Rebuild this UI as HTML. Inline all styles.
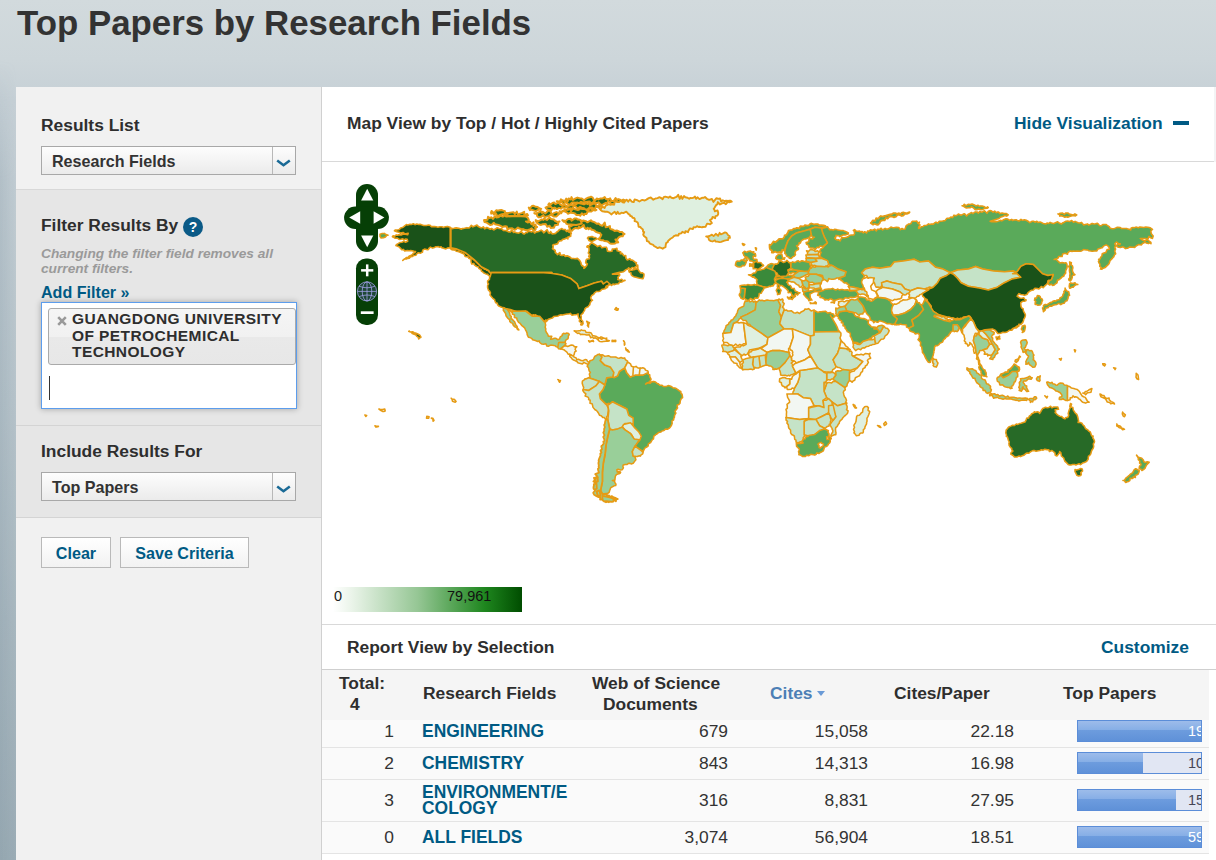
<!DOCTYPE html>
<html><head><meta charset="utf-8"><title>Top Papers by Research Fields</title>
<style>
*{box-sizing:border-box;margin:0;padding:0}
html,body{width:1216px;height:860px;overflow:hidden}
body{font-family:"Liberation Sans",Arial,sans-serif;color:#333;background:#c9d3d8;position:relative}
#bg{position:absolute;left:0;top:0;width:1216px;height:860px;background:linear-gradient(180deg,#d2dadd 0px,#cdd6da 60px,#c6d0d6 100px,#b7c4cb 400px,#a9b8c0 620px,#9cadb6 860px)}
#bg3{position:absolute;left:0;top:60px;width:17px;height:800px;background:linear-gradient(90deg,rgba(120,142,156,.22),rgba(120,142,156,0));-webkit-mask-image:linear-gradient(180deg,transparent 0,#000 120px);mask-image:linear-gradient(180deg,transparent 0,#000 120px)}
#bg2{position:absolute;left:0;top:0;width:1216px;height:100px;background:linear-gradient(90deg,rgba(205,214,218,0) 0,rgba(205,214,218,0) 100%)}
h1{position:absolute;left:17px;top:3px;font-size:34.85px;font-weight:bold;color:#333;white-space:nowrap;line-height:40px}
#left{position:absolute;left:16px;top:87px;width:306px;height:773px;background:#f1f1f1;border-right:1px solid #d0d0d0}
#right{position:absolute;left:322px;top:87px;width:894px;height:773px;background:#fff}
.sec{position:absolute;left:0;width:305px}
.lbl{position:absolute;left:25px;font-size:17.4px;font-weight:bold;color:#2e2e2e;white-space:nowrap;line-height:20px}
.sel{position:absolute;left:25px;width:255px;height:29px;border:1px solid #a8a8a8;background:linear-gradient(#fdfdfd,#ebebeb);font-size:16.1px;font-weight:bold;color:#333;line-height:29px;padding-left:10px;white-space:nowrap}
.sel i{position:absolute;right:0;top:0;width:23px;height:27px;border-left:1px solid #b8b8b8}
.sel svg{position:absolute;right:4px;top:12px}
.btn{position:absolute;height:31px;border:1px solid #b9b9b9;background:linear-gradient(#fff,#f2f2f2);font-size:16.1px;font-weight:bold;color:#005a84;line-height:30.5px;text-align:center;white-space:nowrap}
.note{position:absolute;left:25px;top:159.3px;font-size:13.7px;font-weight:bold;font-style:italic;color:#9a9a9a;line-height:15px;white-space:nowrap}
.addf{position:absolute;left:25px;top:195px;font-size:16.1px;font-weight:bold;color:#005a84;line-height:20px;white-space:nowrap}
.help{position:absolute;left:167px;top:130px;width:20px;height:20px;border-radius:10px;background:#0b5a87;color:#fff;font-size:14px;font-weight:bold;text-align:center;line-height:20px}
.tokbox{position:absolute;left:25px;top:215px;width:256px;height:107px;background:#fff;border:1px solid #5c9ded;box-shadow:0 0 6px rgba(0,0,0,.3)}
.tok{position:absolute;left:6px;top:5px;width:248px;height:57px;border:1px solid #aaa;border-radius:3px;background:linear-gradient(#f5f5f5 0,#f1f1f1 50%,#e9e9e9 51%,#e7e7e7 100%);font-size:15.5px;letter-spacing:.42px;font-weight:bold;color:#2e2e2e;line-height:16.6px;padding:2px 0 0 23px;white-space:nowrap}
.tok svg{position:absolute;left:7.5px;top:7px}
.cursor{position:absolute;left:7px;top:73px;width:1px;height:24px;background:#333}
.hd{position:absolute;font-size:17.4px;font-weight:bold;color:#2e2e2e;white-space:nowrap;line-height:20px}
.lnk{color:#005a84}
.hline{position:absolute;left:0;width:894px;height:1px;background:#d9d9d9}
#tbl{position:absolute;left:0;top:583px;width:887px;height:190px}
.th{position:absolute;font-size:17.4px;font-weight:bold;color:#2e2e2e;white-space:nowrap;line-height:21px;text-align:center}
.row{position:absolute;left:0;width:887px;background:#fafafa;border-bottom:1px solid #e4e4e4}
.c{position:absolute;font-size:17.4px;color:#333;white-space:nowrap;line-height:20px}
.r{text-align:right}
.f{font-weight:bold;color:#005a84;font-size:17.45px;line-height:15.5px}
.bar{position:absolute;left:755px;width:125px;height:22px;border:1px solid #5b8dd8;background:#e1e6f3;overflow:hidden}
.bar s{position:absolute;left:0;top:0;height:20px;background:linear-gradient(#9dbcea 0,#86aee6 45%,#6d9cde 46%,#5f91d8 100%)}
.bar u{position:absolute;left:110px;top:0;font-size:14.5px;line-height:20px;text-decoration:none;color:#fff}
</style></head><body>
<div id="bg"></div><div id="bg3"></div>
<h1>Top Papers by Research Fields</h1>
<div id="left">
 <div class="sec" style="top:0;height:103px;border-bottom:1px solid #d8d8d8"></div>
 <div class="sec" style="top:103px;height:236px;background:#e6e6e6;border-bottom:1px solid #d4d4d4"></div>
 <div class="sec" style="top:339px;height:92px;background:#e6e6e6;border-bottom:1px solid #d4d4d4"></div>
 <div class="lbl" style="top:28px">Results List</div>
 <div class="sel" style="top:59px">Research Fields<i></i><svg width="15" height="9" viewBox="0 0 15 9"><path d="M1.2 1.5 L7.5 6.2 L13.8 1.5" fill="none" stroke="#1a6a96" stroke-width="2.6"/></svg></div>
 <div class="lbl" style="top:128px">Filter Results By</div>
 <div class="help">?</div>
 <div class="note">Changing the filter field removes all<br>current filters.</div>
 <div class="addf">Add Filter »</div>
 <div class="tokbox"><div class="tok"><svg width="10" height="10" viewBox="0 0 10 10"><path d="M1.2 1.2 L8.8 8.8 M8.8 1.2 L1.2 8.8" stroke="#999" stroke-width="2.6" fill="none"/></svg>GUANGDONG UNIVERSITY<br>OF PETROCHEMICAL<br>TECHNOLOGY</div><div class="cursor"></div></div>
 <div class="lbl" style="top:354px">Include Results For</div>
 <div class="sel" style="top:385px">Top Papers<i></i><svg width="15" height="9" viewBox="0 0 15 9"><path d="M1.2 1.5 L7.5 6.2 L13.8 1.5" fill="none" stroke="#1a6a96" stroke-width="2.6"/></svg></div>
 <div class="btn" style="left:25px;top:450px;width:70px">Clear</div>
 <div class="btn" style="left:104px;top:450px;width:129px">Save Criteria</div>
</div>
<div id="right">
 <div class="hd" style="left:25px;top:26px">Map View by Top / Hot / Highly Cited Papers</div>
 <div class="hd lnk" style="left:692px;top:26px">Hide Visualization</div>
 <div style="position:absolute;left:851px;top:34px;width:16px;height:4px;background:#005a84"></div><div style="position:absolute;left:892px;top:0;width:2px;height:75px;background:#f3f4f5"></div>
 <div class="hline" style="top:74px;width:892px"></div>
 <svg id="map" style="position:absolute;left:0;top:0" width="894" height="773" viewBox="322 87 894 773">
<g stroke="#e69b14" stroke-width="1.55" stroke-linejoin="round">
<polygon fill="#1a5219" points="394.4,230.8 395.4,229.9 396.8,229.9 398.8,229.8 399.9,228.9 400.6,227.9 402.5,227.6 403.5,226.9 404.7,225.9 406.4,224.5 407.7,224.9 410,224.2 411.7,224.4 413.3,223.7 414.9,224.7 416.8,224.1 418.6,224.4 420,224.2 421.5,224.8 423.7,225.4 426.5,225.4 428.5,225.1 429.8,225.2 431.4,226.6 434.4,226.6 436.2,226.8 437.8,227.2 440,226.7 442.3,226.8 443.1,227.4 445.3,226.8 447.4,226.4 450.2,227.3 450.2,248.1 456.1,249.1 462,250.5 466.9,253.5 470.9,257.4 475.8,261.4 479.8,265.3 484.7,269.3 485.9,269.3 486.7,270.3 488,270.5 489.6,272.3 492.1,275.2 490.6,278.2 490.3,276.6 488.2,275.1 487.7,274.2 485.8,273.9 483.5,272.7 482.7,271.8 481.4,271 481,269.2 479.7,269 478.8,268.3 478.1,266.7 476.7,266.5 474.6,265.1 473.8,263.4 471.9,264.1 471.3,262.9 471,261.3 471,259.3 468.9,258.4 468.5,257.3 467,256.8 465.1,256.6 464.5,254.8 464,254 462.4,253.3 461.2,252.7 460.1,252.3 458.1,251.5 456.3,251.2 454.4,249.9 453.1,250 451.4,249.4 450.2,248.1 448.2,247.8 445.9,248.9 444.2,248.6 443.1,247.9 441.9,247.9 441.1,246.7 439.4,247.2 438.3,246.6 437.2,246.7 435.8,246.7 434.4,247.6 432.7,248.1 430.4,247.1 428.9,248.3 428.4,249.6 427.4,249.7 424.5,249.1 422.7,250.1 422.5,252.2 421.5,252.5 420.7,253.3 418,252.8 416.6,254 416,255.3 413.8,255.5 412.6,256.5 410.6,256.7 409.3,258.2 407.7,258.4 406.7,258.9 404.6,259 402.8,260.4 403.8,259.5 405.4,258.4 406.7,257.4 408.2,257.2 409,256.2 410.6,255.6 411.8,254.9 412.6,254.5 413.5,253 415,252.7 415.6,251.5 414.1,251.3 412,250.7 410.7,250.5 409.1,250.7 407.3,250.5 404.7,251 403.4,249.4 401.5,249.7 400.8,248.6 399.8,247.7 399,246.7 397.6,246.2 395.9,245.6 396.4,244.7 398.5,243.4 399.8,242.6 401.8,242.3 404,241.4 405.5,242.2 407.7,241.2 407.2,239.2 405.7,239 404,239.9 402.8,238.7 400.8,239.2 399.8,239.4 398.4,238.9 397.4,238.1 394.9,238.2 394.1,237.6 392.4,236.7 393.1,235.8 394.5,236.3 396.3,234.9 397.8,235.2 398.7,234.8 401.1,235.1 402.8,234.3 404.4,234.1 406.4,234.5 407.7,234.7 408.2,233.3 406.5,233.6 404.9,233.8 403.1,232.5 401.8,232.8 400.7,233.2 399,232.3 396.8,231.8"/>
<polygon fill="#276a27" stroke-width="1.65" points="450.9,228.1 452.1,228.6 454,228.3 456.2,227.9 458.8,228.2 460.3,228.7 461.4,229.2 462.2,228.6 464.5,228.3 466.9,227.7 469.1,228 470,227 471.4,225.3 472.9,226.8 475.4,225.8 477,225.1 478.4,226.6 479.3,227 480.9,227.7 482.1,227.7 483.3,226.8 484.7,228.8 486.8,227.5 488.4,228.2 490.3,229.2 491.6,228.5 493.7,229.9 495.2,229.1 497.2,227.8 499.1,228.5 501.5,228.7 503.4,230.5 505,230.5 506.5,230.7 508.5,231.9 510.3,232 511.7,230.1 513.7,232.5 514.7,231.9 516.2,232.8 518.8,233.1 520.9,231.8 522.5,232.7 523.1,233.6 524.4,234 526,232.3 527.2,232.6 528.2,231.3 529.7,231.3 531.5,231.9 533.4,231 534.6,233.1 536.3,231.9 538.7,231.5 541.1,230.1 542.7,231.2 543.7,232.8 547.2,229.7 548.5,232.9 549.7,233.3 550.5,231.5 552.3,233.9 554,233.8 555.5,233.4 556.7,231.9 557.9,231.4 559,230.1 560.9,229.1 561.9,228.5 563,229.5 565.4,229.6 566.5,231.5 567.9,230.5 568.6,231.9 571.3,233.1 570.7,234.7 570.7,236.3 567.9,237.1 567.9,238.9 566.4,238 564.9,238.9 563.4,239.3 562.3,239.6 561.7,240.6 559.5,241 558.4,241.8 557.8,243.6 555.4,244.4 553.9,244.5 552.7,245.2 553.3,247 552.5,248.7 553.8,249.5 555.2,250.5 555.3,252.5 556.7,253.6 557.5,254.7 559.8,252.5 560.4,255.3 562.2,255.4 564.2,254.9 565.1,256.4 567.2,255.9 569.4,256.7 571.4,258.4 573.5,258.5 575.1,258.8 577.4,258.4 579,259.9 579.8,260.7 581,262.9 581.1,264.1 581.9,265.5 583.1,266.2 584.1,267 583.9,268.3 585,267.5 586.7,265.5 587.3,264 585.7,262.8 586,260.6 586.6,259.2 589.2,258.8 589.5,257.1 588.7,256.4 589.7,254.6 588.3,253 588.8,251.5 589.1,250.2 589,247.8 586.9,246.9 587.4,245.9 589.1,245.9 590.2,243.8 591.8,242.7 593.1,243.5 595.8,245.2 597.4,246.6 600.2,245.5 601.9,247.8 604.2,247.3 606.3,247.2 607.1,248.9 607.5,251.1 609.8,251.5 611.9,251.3 612.3,249.1 614.1,249 615.4,248.7 616.9,248.4 617.2,250.8 619.6,251.5 620.6,251.7 620.4,253.6 622.2,253.4 623.8,255.7 625.7,255.5 625.9,258.1 627.3,260 629.9,258.7 630.8,259.9 632.8,260.3 634.8,261.9 636.4,262.7 636.1,263.8 637,266 637.8,268.3 637.7,265 637.4,266.4 635.4,266.7 634.1,268.7 633.4,267.7 632.2,267.5 630,269.4 628.7,267.8 627.9,269 625.7,269.7 625,270.5 623.6,271.7 621.3,272.1 619.6,272.3 612.4,274.1 619.6,274.1 619.6,275.4 617.9,277.2 618.4,278.8 617.8,279.5 619.7,280 621.7,279.3 623,280.7 625,280.4 623.2,281 622.2,281.7 620.8,282.2 619.4,282.1 618.5,283.8 616,284 614.5,284.6 613,284.1 611.5,285.4 610.1,284.4 608.8,284.9 607.9,285.6 607.5,287.2 605.1,288.6 603.3,284 601.5,281.3 594.3,283.1 587,285.8 578.9,288.6 577.1,284 570.8,278.6 561.7,275 550.9,273.2 540,272.6 551.9,272.6 491.3,272.6 489.7,272.3 488.6,270.5 481.3,266.8 474.1,259.6 465,252.4 456,248.8 450.9,247.8"/>
<polygon fill="#276a27" stroke-width="1.9" points="545.5,207.6 547,206.8 548.7,206.5 551.1,206.8 554.2,208.7 552.7,207.4 551.5,210.2 548.3,209.9 547.3,209.4 546.4,208.8"/>
<polygon fill="#276a27" stroke-width="2" points="559.5,211.2 561.2,213.3 562.2,211.2 563.3,210.6 565.1,209.6 567.9,209.9 569.8,208.7 571.1,211.3 572.9,208.3 575.2,209.3 577.8,210 579,209.6 580,208.5 582.3,209.1 583.7,209 585.4,208.5 587.9,211.5 588.8,209.2 590.4,208.1 592.5,209.7 593.7,209 596.5,209.9 595.1,210.5 593.2,210.1 591.4,211.6 588.8,211.2 587.4,212.2 586.4,214.1 584.6,213.8 583.9,215.2 581.8,213.3 580.3,215.8 579,214.9 576.2,214.9 575.4,213.8 573.1,212.9 570.5,212.7 567.9,213.8 567.2,212.7 565.1,211.6 562.7,211.1 561.2,211.7"/>
<polygon fill="#276a27" stroke-width="2" points="548.3,204.5 549.2,203.3 550.9,204.7 552.5,202.9 554.1,202.5 555.4,204 556.7,203.4 558.8,202.5 560.3,204.6 562.1,205.5 565.1,205.1 567.2,206.4 569.1,205.9 570.7,205.2 572.9,204.9 574.6,203.4 576.2,204.4 577,203.5 578.3,201.6 580.4,203.4 582.1,203.7 584,204.4 586.4,203.1 587.4,204 588.9,202.8 589.9,205.4 592.6,204.2 594.2,203.1 595.8,204.8 596.8,206.6 599,205 601.2,205 602.1,206.8 600.6,205.6 599.5,208.2 598.2,207.4 595.8,206.8 595,208.5 593,208.2 592.2,207.4 589.8,207.3 587.4,209.5 585.2,209.3 584.1,208.3 581.8,207.6 580.1,206.8 577.8,208.6 575.6,206.4 574,205.8 572.3,208.9 570.7,208.2 569,208.8 566.4,207.1 564.2,207.9 562.6,207.1 560.9,208.7 559.1,207.9 556.9,209.1 554.6,207.6 552.5,208.2"/>
<polygon fill="#276a27" stroke-width="2" points="556.7,201.2 558.7,201.6 560,201.4 560.9,199.3 562.2,200.1 564.9,201.2 566.2,198.6 567.8,201.2 568.6,198.5 570.7,199.5 571.5,197.1 572.8,200.2 575.1,198.7 577.4,197.6 579.5,198.3 581.8,198.5 584,200.3 586,198.7 587.8,197.8 589.8,197.3 591,196.7 592.7,197.6 594.5,201.3 596.7,198.5 598.4,199.4 600.5,198.4 602.8,198.4 604.7,197.1 606.1,199.2 608.6,199.1 610.1,198.4 611.4,201 613.6,201.1 615.6,198 616.7,200.3 618.2,199.1 619.4,199.4 621.7,200.6 623.3,199.6 625.2,200.5 624.3,200.9 621.9,201 619.9,201.8 617.9,202.9 616.8,202.3 615.7,203 613.7,203.8 611.3,204.1 609.7,202 608.2,200.8 607,203.7 605.8,202.8 603.1,204.4 600.8,204.8 598.7,202.3 596.9,203.1 595.8,203 594.4,203.1 593.2,202 591.1,203.6 589.5,201.4 587.3,201.8 584.6,202.3 583,202.6 580.9,201.7 579.2,203.2 577.6,202.6 575.5,202.8 573.5,202.6 571.6,202.8 570.4,204.4 568.3,204.3 565.8,202.1 563.7,203.7 562.8,203.4 561.3,201.7 559.1,202.4"/>
<polygon fill="#276a27" points="587.4,238.2 588.2,237.1 590.3,236.8 592,236.5 593,236.8 593.5,237.6 595.5,237.5 597.2,238.9 595.7,239.6 593,241 591.2,241.5 588.8,240.6 588.2,238.9"/>
<polygon fill="#276a27" stroke-width="2" points="580.4,220.1 581.7,221.3 583.3,220.5 585.8,221.1 587.2,222.3 588.8,221.5 590.9,220.3 592.2,221.5 593.8,221.9 595.2,222.6 596.7,223.7 598.6,223.6 600.2,225 602.4,225.9 604.7,222.5 605.7,227.3 608.4,226.6 609.9,226.1 610.1,228.4 611.2,229.3 612.7,229.6 614.6,230.9 616.8,230.5 618.5,231.1 619.6,232 622,231.9 623.4,233.5 624.5,234 623.3,234.6 622.7,236.3 620.6,236.3 619.6,236.8 618.4,237.8 616.8,239.8 615.4,239.6 616.2,241 617.6,241.2 618.2,242.4 616.7,242.2 615.1,243.4 612.7,243.8 611.2,243.8 609.8,243.4 608.1,241.7 606.7,241.2 604.2,241 603,240.2 601.3,240.3 599.6,239.8 598.6,238.9 599.9,237.9 600.9,235.8 601.4,234.7 600.5,233.9 599.8,232.9 598.3,232.7 595.8,231.9 594.7,230.7 592.7,229.8 591.6,229.8 590.3,228 588.6,229.3 587.7,227.7 586.1,229 584.6,227.7 583.8,225 581.8,226.8 579.8,228 579,226.6 578.3,228.6 575.3,228 573.5,229.1 571.9,230.8 570,230.9 567.9,230.5 570.6,231.3 570,229.6 568.9,226.3 570.7,226.3"/>
<polygon fill="#276a27" stroke-width="2" points="562.3,220.1 563.5,220.6 565.8,220.9 567,219.7 568,219 570.7,218.7 571.5,220.7 574.4,218.6 576.6,218.5 577.6,219.6 578.7,219.4 580.4,220.1 581.8,223.6 576.2,225 567.9,224.3 566.6,223.9 565.4,221.9 563.9,221.7"/>
<polygon fill="#276a27" stroke-width="2" points="535.7,220.1 537.9,221.3 540,220.4 541.8,219.4 543.5,219.9 544.1,218.7 545.2,219.1 546.9,219.9 549.5,217.5 551.1,219 553.9,219.4 555.2,221 557.4,222 559.5,221.5 558.3,222 558,224.8 556.7,225 555,225.1 554,227.7 552.5,227.7 550.7,227.9 549.6,225.7 548.3,226.3 547.2,226.8 545.7,224 542.7,224.3 541.1,224.9 539.3,224.5 537.1,222.9 536.3,221.9"/>
<polygon fill="#276a27" stroke-width="2" points="534.3,213.1 535.4,213.8 536.5,213.1 539,212.4 540.4,210.6 542,213 542.7,211.7 544.1,212.7 545.5,213.4 548,210.7 549.8,210.4 551.1,212.4 551.6,214.9 553.8,213.2 556.4,212.1 558.1,212.8 559.5,213.8 558.2,214.8 556.3,216.6 553.9,216.6 551.9,215.4 550.4,214.7 549.3,215.8 547.8,216.3 545.5,216.8 544.6,217.3 543.5,215.1 541,216.9 538.5,217.3 537.1,215.9 537.1,214.5 535.9,213.7"/>
<polygon fill="#276a27" stroke-width="1.9" points="528.7,207.5 529.7,208.6 531.9,206 533.3,205.7 535.7,206.8 537.6,207 539.3,208.1 541.3,208.9 540.3,209 538.6,208.5 538,210.3 537.1,210.3 535.9,211.2 533.6,210.4 531.5,209.6 529.9,210.2"/>
<polygon fill="#276a27" stroke-width="1.9" points="503.6,213.8 511.9,212.4 513.5,212.1 514.8,214.2 516.8,211.5 518.1,215.1 519.7,213.7 521.7,213.1 524.2,211.8 524.3,215.1 527.1,213.9 528,215.2 520.3,216.3 510.5,215.9 508.4,216.3 507.5,214.3 504.7,216.7"/>
<polygon fill="#276a27" stroke-width="2" points="484,220.1 485.6,219.9 487.5,219.8 488,216.8 489.6,218 491.2,217.3 493.1,218.9 495,216 496.3,217.4 498,217.3 499.1,216.8 500.4,215.5 502.8,216.7 504.4,215.5 506.3,216.6 516.1,215.9 525.9,216.6 527.6,217.5 528.7,219.4 528.5,221.3 525.9,221.5 527.6,222.5 530,221.8 531.5,224.3 533.6,222.3 533.4,225.9 535.5,224.5 536.1,226.8 537.1,227 535.2,227.7 535.7,229.1 535,230.4 533.7,230.5 531.6,228.3 529.9,229.4 528.7,229.8 527.7,230.2 525.4,230.1 522.7,229 521.7,230.5 520.9,228.7 519.4,228.6 518,227.5 516.1,229.1 514.6,229.8 512.2,228.3 509.1,228.4 507.4,229.6 506.8,226.4 505.1,226.2 502.2,227 500.7,225.9 498.5,225 496.1,224.5 495.2,224.3 493.8,222.7 492.1,224.6 490.2,225 488.2,223.6 486.6,222.4 484.5,222"/>
<polygon fill="#276a27" stroke-width="1.9" points="491,212.4 491.6,210.9 493.7,212.9 495.1,211.6 496.4,210.1 498,210.7 499.4,210.2 501.3,210 503.3,210.7 505,211.2 504.8,212.6 507,213.1 500.8,214.5 499.3,215.2 497.5,216.5 496,213.3 493.8,214.5 493.9,212.9 491.2,213.7"/>
<polygon fill="#276a27" points="628.7,270.5 630.4,270.3 631.8,270.3 633.3,269.8 634.9,269.4 635.9,268.7 637.8,268.9 639.1,271 640.7,272.9 642.4,272.8 644,274.1 643.9,276 643.1,278.6 641.7,278.6 639.6,278.2 637.7,277.7 636,277.2 633.7,276.7 632.3,275.9 631.2,274.8 630.9,272.7 629.3,272.3"/>
<polygon fill="#1a5219" points="491.3,272.6 551.9,272.6 540,272.6 550.9,273.2 561.7,275 570.8,278.6 577.1,284 578.9,288.6 587,285.8 594.3,283.1 601.5,281.3 603.3,284 606.9,281.3 609.7,284 608.4,285.3 607.2,285.8 606.1,286.3 605.1,288.6 603.8,289.1 601.6,289.5 600.4,290.9 599.7,291.3 598.5,291.6 596.6,291.4 594.3,293.1 593.7,294.3 591.8,295.4 590.7,297.6 590.9,298.9 592.5,300.3 591.5,300.8 590.2,302.8 589.8,304.8 589,305.4 588.1,306.8 586.1,307.6 584.9,308.7 584.6,310.4 583.4,312.1 583,313.2 581.3,314.7 580.7,315.7 581.3,316.6 581.2,318.5 581.6,320.2 582.8,321.3 583.1,323.8 581.8,325.1 580.7,324.7 581.5,323.1 579.3,321.1 579.9,319.3 579,318.4 578.2,316.3 578.1,313.9 576.7,314.5 575.4,314.8 574.5,314.8 572,315.2 570.3,313.4 568.2,313.9 567,313.9 564.6,314.4 562.4,315.1 560.9,314.8 559.3,315.2 558,316 556.4,316.2 553.7,316.6 552.3,318.1 550.7,318.4 548.3,319.3 547.7,320 546.9,321 544.6,322 541,318.4 535.6,314.8 534.6,315.3 533.3,314.7 532,315.7 526.6,311.2 517.5,312.1 510.3,309.4 504.8,308.8 504.1,307.8 501.6,307.3 500.5,306.7 498.8,306.1 497.6,304.8 497.3,303.2 495.7,302.7 495,301 494.6,299.7 492.8,298.3 492.2,297.6 491.4,296.7 490,294.9 490.5,292.8 489.5,291 488.6,290.4 488.1,289 487.6,287.4 487.6,285.5 488.5,283.8 487.7,283.1 487.6,281.1 489.5,279.2 489.5,277.8 490.4,275.9"/>
<polygon fill="#dff0e0" stroke-width="1.9" points="612.4,204.4 614.2,204.7 614.8,201.1 617.5,202 619.2,202.1 620.9,200.8 622.7,202.3 624.1,202.6 625,201.3 626.6,199.7 628.2,201.7 629.8,199.5 632.1,201.8 633.7,202.1 634.6,199.4 637.1,200.2 639.4,201.5 641.3,200.3 642.2,199.9 644.8,200.5 646.4,199.6 648.7,198.1 650.8,197.5 653.3,199.7 655.5,198.5 657.6,198.1 659.1,197.2 661.1,198 662.6,199.2 663.7,197.2 665.3,196.6 667.1,197.1 668.5,197.7 670,196.4 671.4,197.7 673.6,198.2 675.7,197.2 676.6,196.8 678.2,194.8 679.8,198.9 681.2,196 682.4,198.9 684,196.1 685.3,197.2 687.5,197.7 689.2,198.8 690.5,197.9 692.1,198.1 693.8,197.6 695,196.6 696.1,198.8 697.4,197.3 699.5,199.1 702,197.8 703.5,197.9 705,197 706.9,198.8 709.2,199.8 711.9,199 713.4,201.9 716.5,198.1 718.2,198.9 720.1,198.5 721.1,201.4 722.8,200.2 724.7,201.3 726,200.7 728.1,201 729.2,202.4 731.8,201.7 730.6,200.6 729,200.7 727.5,202.1 725.9,204.2 724,202.8 722.6,203.2 721.5,203.7 720,204.5 717.8,202.1 717.3,204.4 716.3,204.9 715.1,206.7 714.2,208.2 713.7,208.9 714.5,209.9 714.9,211.4 717.5,210.4 718.2,212.6 718.2,214 717.4,215.7 715.5,216.2 715.1,218.2 712.6,216.9 711.9,218.9 709.9,220 711.9,223 710.1,224.3 708.6,223.9 707.1,223.7 705.5,226.9 702.8,227 702,227.3 700,226.8 698.6,227 697,226.1 695.6,227.4 693.6,227.2 692.8,229.1 690,228.4 688.4,230.7 688,232.2 685.5,231.2 684.9,233 682.4,231.8 681.1,233.4 680.2,233.6 679,233.6 678.4,235.6 675.8,235.3 673.9,236.1 672.7,237.5 670.5,238.8 669.4,239.7 668.1,240.9 667.8,242.1 666.3,242.8 665.7,245.1 665.5,247.2 663.9,247.8 662.7,248.7 660.4,247.7 659.4,247.3 657.7,248.1 656.2,247.2 654,246 653.2,244.8 650.6,243.9 649.7,243.2 648.6,241.5 646.9,241.1 646.5,238.1 644,236.1 643.2,234.5 644.2,232.2 643.1,231.6 642.9,229.5 641.1,228.1 640.4,227 638.6,226.7 638.3,224.6 637.7,222.5 636.5,221.7 634.6,221.1 634.8,219.1 634.1,218 632.5,217.7 631.7,216.2 630.2,216 629.7,214.5 628.7,214.4 627.9,213.3 626.3,211.6 623.3,213.1 621.4,212.6 620.4,213.6 618.9,213.8 617.6,211.8 616.4,214.1 614.7,211.8 612.4,213.5 611.3,214.4 609.3,212.6 607,211.7 605.1,211.7 604,211.5 602.3,211.3 600.6,209.9 599.7,208.9 601.2,208.6 602.2,206.5 604.6,207.9 605.9,205.3 607.3,205 608.9,204.2 610.4,204.9"/>
<polygon fill="#c2e2c8" stroke-width="1.8" points="706.1,236.5 707.6,236.3 709.5,236 711.9,234.6 713.6,236.1 715.8,233.8 718.1,235.8 719.6,232.8 720.9,234.3 722.6,233.6 725,232.4 726.6,232.9 728.2,235.2 729.6,236 730,237.9 728.5,237.6 728.2,240 726.7,240.2 724.5,240.6 723.1,241.1 721.2,241.8 719.6,242.1 717.2,241.6 715.5,241.5 714.9,240.3 712.6,241.5 711,241.1 709.2,240.1 708.7,239.1 708.4,237.5"/>
<polygon fill="#99cf99" points="503.5,308.1 510.8,311.2 525.2,310.9 532.5,316.3 539.7,316.3 544.2,321.7 546,319.9 546.2,321.4 545.1,322.6 545.7,325.1 545.1,327.1 545.8,328.8 545.6,330.4 546.3,332.3 547.8,334.4 548.4,336.3 551.8,336.2 550.7,339.3 552.4,338.9 554.3,338.3 555.6,338.2 557.8,339.7 559.6,338.9 560.1,337.1 562.4,335.4 562.3,334.4 563.6,333.3 565.1,333.7 566.8,333.1 568.7,333.5 569.2,334.6 568.3,336.2 568.3,337.6 567.8,338.9 566,339.9 565.3,341.4 565,342.5 559.6,342.5 558.7,347 557.7,346.9 556.2,346.7 555.2,345.7 554,345.6 552.4,345.2 550.7,345.1 548.3,346.2 546.9,346.1 545.9,343.8 543.7,344.3 541.9,344.1 540.5,343.1 539.7,342.5 539.2,340.9 537.7,341.4 535.4,340.6 532.5,339.8 532,338.6 529.7,337.4 528.4,337.2 527.9,336.2 527.2,334.7 527,332.9 526.1,330.8 525.5,329.8 524.6,327.8 523.2,326.6 521.6,325.3 520.8,324.2 519.8,323.1 518.6,322.4 517.1,319.9 516.7,318 514.4,317.4 514.5,314.9 513.5,314.5 512.3,314.3 512.4,312.5 511.1,311.9 510.4,310.4 508.9,310.6 507.1,309.4"/>
<polygon fill="#99cf99" points="503.5,308.1 507.1,309 508.1,310.5 509.3,312.3 509.8,313.6 509.9,314.5 510,315.4 511.3,316.3 511,318.7 512.3,319.3 513.5,320.8 514.4,321.4 515.1,323.1 516,325.2 517.1,326.2 517.2,327.6 518.9,329.9 517.6,329.6 516.6,327.6 515.3,327.1 514,326.1 513,324.8 512.8,323.4 510.8,322.6 509.8,321.4 509.5,319.5 507.9,318.4 507.1,317.2 506,315.7 505.6,313.6 504.4,311.8 503.3,310.3"/>
<polygon fill="#99cf99" points="558.7,342.5 565,342.5 566,343.7 564.1,346.1 560.5,348.9 558.6,348.8 557.8,347.4"/>
<polygon fill="#f2f7f2" points="564.1,346.1 565.7,345.7 567.7,346.5 568.8,346.1 570.5,345.2 571.8,345.1 573.6,345.6 574.4,346.8 576.8,346.7 575.7,347.8 575.1,349.4 576.2,351.1 575,351.6 574.5,352.9 574.1,354.6 573.2,356.1 569.6,354.3 568.3,354.3 566.9,352.1 565,350.7 563.8,349.7 562.3,349.2 560.5,348.9"/>
<polygon fill="#dff0e0" points="569.6,354.3 573.2,356.1 574.3,357.1 576.1,357.9 576.8,359.7 578.5,359.3 579.6,359.7 581.3,360.6 582.8,360.7 585,359.6 586.7,359.7 587.5,361.5 589.5,362.4 587.7,365.1 587.4,363.9 586.1,363.6 584,362.4 582.4,363.9 579.5,363.3 577.9,362.8 577.2,361.7 575,360.6 573.6,360 572.4,359.4 571.4,357.9 569.8,356.5"/>
<polygon fill="#dff0e0" points="574.1,330.8 575.7,331 577.2,331 579.1,330.8 580.3,330.8 581.3,329.9 583.1,330.6 585.1,330.5 586.1,332.4 587.8,332.4 588.6,332.6 589.7,332.6 591.2,333 592.6,335.6 595.8,336.2 597.5,337.2 599.5,337.9 601,336.9 602.5,337.5 603.9,339.2 604.8,338.9 599.4,339.4 597.9,339.6 596.9,338.9 595.3,337.8 593.9,338.3 592.2,337.1 590.7,337.8 589.3,334.7 586.6,335 584.9,334.4 583.9,334.5 582.2,334.2 580.8,334.6 579,333 577.7,333.5 576.2,332.4 575.4,331.6"/>
<polygon fill="#f2f7f2" points="598.5,338 599.6,338 601.8,339.3 603.1,338.1 604.6,338.2 605.8,338.7 606.7,338 606.4,339.9 609.4,340.7 607.9,341.2 605.8,341.3 603,341.6 602.1,341.7 599.7,341.4 598.5,340.7 598.2,339.1"/>
<polygon fill="#f2f7f2" points="588.6,340.7 589.7,341.4 591.1,340.9 593.1,340.2 593.6,341.6 592.1,341 589.5,342"/>
<polygon fill="#f2f7f2" points="612.1,340.2 613.7,340.4 615.7,340.2 615.7,341.6 614,341.2 612.1,341.6"/>
<polygon fill="#f2f7f2" points="623.5,340.7 624.7,342.5 624.3,343.5 624.4,345.2 624.9,344.1 624.3,341.8"/>
<polygon fill="#f2f7f2" points="625.6,347.9 626.3,349.4 627.5,349.8 628,351.8 629.3,352.1 628.1,350.4 626.9,350.7 626,349.9"/>
<polygon fill="#f2f7f2" points="586.7,321.3 587.9,321.9 589.5,322.6 588.7,324.1 588.4,326.2 588.6,327.1 587.4,325.6 587.8,324.4 587.4,322.6"/>
<polygon fill="#f2f7f2" points="614.8,309.4 616.2,307.5 617.7,309.4 618.4,308.7 617.9,310.1 616.3,310.1"/>
<polygon fill="#f2f7f2" points="557.8,379.6 558.9,380.2 560.5,380.5 559.6,382.3 559,381.6 558.7,380"/>
<polygon fill="#5aaa5a" points="606.7,377.8 613,376.9 617.5,376 619.3,371.5 624.7,367.8 626.6,372.4 630.2,376.9 635.6,375.1 642.8,375.1 648.3,372.4 648.1,374.2 649.7,374.8 649.9,377.3 650.8,378.4 651,379.6 649.9,381.3 648.5,382.5 645.6,384.1 646.2,383.4 647.4,382.7 650.2,383.2 651.7,381.8 653.7,381.4 655.5,382 657.1,383.4 658.3,383.8 659.8,385.3 661.8,385.2 662.7,385.9 663.5,386.4 665.9,386.6 668.1,385.6 670,386 671.8,386.8 673.3,388 674.8,387.9 676.6,388.8 678.2,389.9 679.1,390.8 680.8,391.4 680.9,393.1 682.1,394.4 682.6,397.7 681.3,398.6 680.3,400.8 680,403.3 678.9,404.5 677.2,405 677.2,406.7 677.6,407.9 676.6,409.2 674.9,411.4 675.9,413.1 675,414.5 674.5,415.8 674.4,417.4 673.9,418.1 673.6,419.8 671.9,421.1 672.2,423.3 671.5,425.3 670.3,427.1 669.7,427.9 667.8,429.2 665.5,429 664.3,430.3 663,430.8 662,430.9 660.9,432.1 658.7,432.4 656.7,434.2 655.8,434.4 655.1,435.4 653.8,436.2 653.5,438.9 652.2,439.8 651.6,440.9 650.6,442.5 648.4,443.9 648.1,446.2 646.7,447 645.1,447.9 644.1,449.4 643.1,451.6 635,446.1 639.5,439.8 640.4,436.2 637.7,432.6 633.2,428.9 633.2,423.5 633.2,418.1 628.7,415.4 626.8,409 617.8,404.5 612.4,401.8 610.3,404 608.5,403.3 607.1,404.2 604.8,403.1 599.4,398.6 599.4,394.1 603,389.6 604.8,385"/>
<polygon fill="#99cf99" points="589.5,362.4 589.9,360.7 592.5,359.9 593.7,359 594,357.9 594.9,356.2 596,355.8 597.9,354.4 599.4,354.3 602.1,357 600.3,360.6 604.8,365.1 610.3,366.9 613.9,372.4 613,376.9 606.7,377.8 604.8,385 599.4,381.4 594,379.6 588.6,377.8 590.1,376.7 589.3,374.1 590.4,372.4 589.5,371.5 588.9,370 588.6,367.8 587.2,366.4 587.7,365.1"/>
<polygon fill="#c5e3c7" points="599.4,354.3 600.1,354.9 602.1,354.8 603.7,355.5 604.7,356.3 606.7,356.1 608.5,355.7 610.9,357.1 612.5,357 615.2,356.9 616.3,357.3 617.5,357.9 619.2,358.3 621.1,357.5 622.8,358.3 624.7,357.9 625.3,359.6 627.6,361.1 627.5,362.4 624.7,367.8 619.3,371.5 617.5,376 613.9,377.8 613,376.9 613.9,372.4 610.3,366.9 604.8,365.1 600.3,360.6 602.1,357"/>
<polygon fill="#f2f7f2" points="627.5,362.4 628.4,362.5 630.5,363.8 631.4,366.3 633.8,366.9 634.7,366.8 636.1,366.4 637.6,367.8 640,368.4 642.8,367.8 644.6,368.4 645.5,370.1 647.8,371 648.3,372.4 642.8,375.1 635.6,375.1 630.2,376.9 626.6,372.4 624.7,367.8"/>
<polygon fill="#f2f7f2" points="633.4,367.3 632.9,375.1"/>
<polygon fill="#f2f7f2" points="640.1,367.8 639.2,375.1"/>
<polygon fill="#c5e3c7" points="588.6,377.8 594,379.6 599.4,381.4 595.8,385.9 588.6,390.5 583.1,389.6 583.7,387.6 582.9,385.5 582.2,383.2 582.4,381.2 584.5,379.7 584.9,378.7 585.8,379"/>
<polygon fill="#c5e3c7" points="583.1,389.6 588.6,390.5 595.8,385.9 599.4,381.4 604.8,385 603,389.6 599.4,394.1 600.3,398.6 604.8,403.1 605.3,403.8 606.7,404.9 608.5,408.6 607.6,415.8 606.6,416.8 606.7,419.4 605.2,418.9 604.3,417.6 602.7,417.4 601.2,415.8 599.6,415.3 598.6,413.4 597.4,411.5 596.1,410.3 595,409.7 594,408.6 592.9,407.1 592.5,405 592.1,403.8 590,403.3 590.2,400.3 588.6,399.5 588.8,398.4 588,397.1 585.1,396 585.9,393.8 584,392.3 582.8,390.6"/>
<polygon fill="#c5e3c7" points="607.8,419.9 608.8,410.9 607.8,405.4 612.4,401.8 617.8,404.5 626.8,409 628.7,415.4 633.2,418.1 633.2,423.5 632.2,424.2 630.5,423.5 625,423.5 622.3,427.1 617.8,428.9 612.4,429.9 609.7,428.9"/>
<polygon fill="#dff0e0" points="622.3,427.1 623.6,424.4 630.5,422.8 634.1,427.1 638.6,431.7 641.3,436.2 639.5,440.7 634.1,439.4 631.4,434.4 625,429.9"/>
<polygon fill="#99cf99" points="609.7,428.9 612.4,429.9 617.8,428.9 622.3,427.1 625,429.9 630.5,433.5 634.1,438.9 639.5,439.8 635,446.1 632.3,451.6 633.2,456.1 635,457.1 635.9,459.7 635,460.9 633.2,463.3 631.8,463.9 629.3,463.2 628.1,463.6 627.1,464.5 625.2,464.5 623.2,465.1 622.9,466.4 623.4,467.8 622.3,469.7 620.5,469.9 618.1,469.2 616.9,469.7 617.2,471.9 620.5,472.4 620,473.1 618.7,473.7 616.5,474.5 615.4,476.2 615.1,477.8 614.9,480.1 612.4,480.5 614.4,481.1 615.1,482.9 616,484.1 615.7,485.6 614,485.8 612.4,486.8 610.8,487.6 609.7,490.5 609.1,492.5 607.8,493.2 602.4,494.1 600.6,490.5 602.4,481.4 602.4,472.4 603.3,463.3 605.1,454.3 606,445.2 607.8,436.2"/>
<polygon fill="#99cf99" stroke-width="1.8" points="606,419 607.8,419.9 609.7,428.9 607.8,436.2 606,445.2 605.1,454.3 603.3,463.3 602.4,472.4 602.4,481.4 600.6,490.5 602.4,494.1 606.9,494.1 607,495.9 609,495.4 609.7,496.8 611.7,496.1 613.9,497.4 616,498.2 617.8,499.1 615.8,499.4 614.2,499 612.4,501.3 609.9,499.1 608.8,502.2 608.1,501.2 606,502.3 604.3,499.9 603.3,499.3 601.5,499.5 600.1,499.7 600.2,496.8 598.6,497.2 596.1,495.9 594.2,494.8 593.2,492.8 594.8,490.8 595.1,489.5 594.3,488.7 594.7,486.9 595.2,485.5 595.1,484.2 595.5,482.6 593.4,481.4 594.8,480.2 593.9,477.8 597.6,477.4 597,476 595.2,474.2 599,472.6 598.2,470.4 597.9,468.8 598.9,467.8 598.6,466.6 598.8,465.5 598.4,463 598.8,461.5 598.6,460.5 599,459 599.9,456.9 600.5,455.5 600.3,453.7 601.5,452.5 600.5,450.5 602,449.3 601.7,448.1 601.3,446.2 602.5,445.1 603.8,443.5 603.3,441.6 604.5,440.8 604.3,439.4 603.2,437 604.5,435.2 603.3,432.7 604.2,430.8 604.1,428.9 604.9,427.1 604.1,424.9 604.9,423.7 605.1,421.7 605.4,420.9"/>
<polygon fill="#c5e3c7" points="635,446.1 641.3,450.7 643.1,452.5 642.7,453.9 640.8,455.2 640.4,456.1 639.4,455.8 637.2,456.6 635.9,456.5 634.9,456.2 633.2,456.1 632.3,451.6"/>
<polygon fill="#f2f7f2" points="617.8,471.5 620.5,472 619.6,473.5"/>
<polygon fill="#5aaa5a" points="826.2,227.3 827.5,226.8 828.7,228.6 829.6,229.7 831,229.6 833.2,230.1 834.8,229.2 836.2,229.4 837.9,230.1 841,230.4 842.9,230.4 844.2,231 846.6,231.9 848.4,232.9 848.2,234 845.9,234.7 845.2,235 843.1,235 841,236 839.8,236.7 838.7,235.7 836.1,235.4 835.7,237.3 834.8,237.8 835.7,239.3 837.3,240 838.5,239.7 840.1,241 841.7,237.6 843.5,237.7 844.7,237.8 846.5,237.3 848.4,236.6 849.7,235.3 851.9,235.1 853.9,234.9 854.6,233.5 854.4,232.5 854.2,231.2 853.4,230.4 854.6,229.5 856.1,231 858,231.2 859.5,231 860,231.8 862.2,231.5 863.2,232.9 864.7,231.7 866.6,233 867.7,230.9 869.4,231 870.4,229.7 872.6,230.2 874.7,229.1 876.3,230.9 877.5,229.3 879,229.2 880,229.2 881.2,228.2 882.6,229.9 885.1,228.4 887,229.2 889,228.5 890.9,227.1 892.4,227.5 893.9,227.8 896.4,227.2 898.8,227.4 900.4,229.7 902.1,228.5 903.2,229.3 905.1,228.9 906,226.1 906.7,225.2 907.9,224.6 908.7,223.9 909.7,223.9 910.9,223.6 911.6,222 912.6,221.2 914.1,221.2 915.6,221.2 916.8,221 917.8,223.1 919.5,222.1 918.6,223.5 920,225.1 918.6,227.1 918.6,228.4 919.7,228.3 921.2,226.8 923.1,226.6 924.1,225.4 926.5,225.3 927.5,224.7 928.6,223.9 929.7,224.4 931.2,224.1 933.4,224.1 934.7,222.9 936,222.1 937.6,223 938.4,222.5 939.1,221.3 941.2,221.3 942.6,221.1 945.1,220.6 946.7,218.5 947.5,218.2 949.3,218.3 950.8,217 952.6,217.6 954,215.1 955.7,215.8 957.5,214.9 958.3,214 961,215.2 963.3,214.1 964.6,213.8 966.6,216 968.4,213.9 969.5,213.7 971.6,212.5 973.1,213.6 974.2,212.4 975.3,211.9 977.4,212.1 978.4,213.1 979.8,211.4 982.1,212.2 984.4,210.7 987.1,213.2 988.3,211.2 990.1,210.6 991.7,211.1 993.1,212.2 994.7,211.1 996.3,212.7 997.3,212.1 998.8,212.1 999.6,213.5 1002.1,213 1004,213.5 1006.5,213.5 1008.2,214.9 1006.7,216.1 1004.6,215.6 1002.7,216.5 1000.4,217.2 999.1,218.5 990.1,221.2 991.7,221.8 993.4,221.7 995.8,221.6 997.1,221.6 998.9,220.9 1000.9,220.3 1001.8,220.9 1004.1,219.4 1006,218.8 1007.8,219 1009.5,220.3 1011.8,219.4 1012.6,220.5 1013.9,219.9 1016.1,219.7 1017.4,220.4 1019.2,220.9 1021,219.3 1022.6,220.3 1024.4,219.8 1026.3,220.3 1028,221.2 1029.7,222.6 1032.2,221.3 1033.5,221.2 1035,222.2 1036.9,221.3 1038,222.4 1040,222.1 1041.1,222.3 1043.2,223.5 1046.1,223.9 1047,223 1048.7,223.5 1050.1,222.4 1051.5,223 1053.5,223.6 1055.4,222.7 1057.7,221.8 1059.1,223 1061.6,223.9 1062.4,223 1063.7,222.5 1066,221.2 1067.6,221.1 1069.9,221.4 1071.7,220.5 1073.5,222.3 1075.1,221.4 1076.8,222.1 1078.1,222.8 1079.5,223 1081.6,222.4 1083.7,225 1085.2,224.5 1087.7,223.9 1088.6,225.1 1089.8,224.6 1092.1,223.4 1094.2,224 1095.5,223.8 1097.4,223.2 1098.6,224.4 1099.5,225.6 1101,225.8 1103.1,224.4 1104.5,224.4 1106.3,224.5 1107.6,225.7 1109.3,226.7 1110.3,228.3 1111.2,228.4 1112.2,228.8 1114.6,228.4 1116.5,227.6 1117.6,227.3 1120.3,227.5 1121.7,228.6 1124,228.4 1126.6,228.4 1127.8,229.1 1129.3,229.3 1130.8,230 1131.2,227.9 1132.9,227.5 1134.3,227.8 1135.9,227.1 1138.4,227.8 1140,226.9 1141.9,227.2 1143.8,227.5 1145.8,227.1 1147.7,227.2 1149.2,227.6 1150.7,228.1 1152.5,229.3 1151.5,230.2 1150.8,231.7 1151.5,233.9 1153.2,236 1152.5,238.4 1150.7,237.8 1149,236.4 1147.8,239.4 1145.6,238.4 1140.2,238.4 1140.9,238.9 1142.8,240.3 1144.7,240.9 1146.3,240 1147.7,240 1149.2,241.1 1150.9,242.3 1151,243.8 1150.1,242.9 1148.4,243.6 1146.2,243 1145.2,242.2 1143.8,242.9 1142.7,243.3 1141.5,244.9 1138.6,244.6 1136.5,245.7 1134.7,247.4 1133.2,247.2 1132.1,247.2 1129.8,246.9 1127.5,248.3 1125.5,248.6 1123.7,247.1 1122.1,246.9 1120.3,247.4 1118.6,247.2 1117.1,246.7 1116.7,245.6 1117.5,244.1 1119.6,244.8 1120.3,243.8 1118.6,243.6 1116.6,242 1114.8,243.8 1115.7,245.5 1114.8,247.4 1115.6,249.1 1114.7,251.1 1115.7,253.8 1114.6,254.7 1113.8,256.8 1113,257.4 1111.8,258.9 1110,260.8 1109.4,262.8 1108.5,264.5 1107.1,265.6 1105.3,267.4 1103.1,268.2 1101.9,269.3 1100.4,269.1 1101.4,267.6 1099.8,266.4 1099.9,264.1 1099,263.1 1098.4,261.3 1099.3,259.9 1098.6,259.2 1100,258.9 1100.7,257.2 1101.9,256 1102.2,253.8 1104,253 1105.9,252.4 1107.1,249.5 1109.4,249.2 1109.1,247.4 1107.6,245.6 1106.1,244.9 1103.9,245.9 1103.1,246.5 1102.4,247.7 1100.9,247.9 1099.8,248.6 1097.9,249.1 1096.7,251 1094.7,251.1 1092.1,251.3 1090.8,251.1 1088.9,250.7 1087.7,250.1 1086.2,249.9 1083.6,249.6 1081.6,250.9 1080,251.2 1076.8,251 1075.7,251.2 1073.1,251 1072,251.5 1070.7,251.1 1068.9,251.7 1067.8,252.8 1067.6,254.2 1065.1,253.2 1062.6,254 1062.1,256.5 1060.6,256.5 1058.6,256.5 1058,258.2 1055.7,259.1 1054.2,259.5 1055.4,259.1 1057.3,260.5 1058.8,261.9 1059.9,262.9 1062.1,262.6 1064.6,263 1066,262.8 1066.8,263.9 1067.2,266.3 1066.9,268.2 1066.1,269.8 1065.6,271 1065.7,273.1 1064.2,274.6 1064,276 1061.9,277 1061,278.2 1058.8,280 1057.5,280.1 1057,282.8 1055.1,284.1 1053.7,285.3 1052.4,285.4 1051.5,284.2 1049.5,284.9 1047.9,283.6 1048.5,282.6 1049.5,280.2 1051.5,279.1 1053.3,274.6 1047.9,275.5 1042.5,273.7 1037,268.2 1033.4,264.6 1026.2,263.7 1020.8,266.4 1017.1,271.8 1012.6,273.7 1013.6,270.9 1004.5,271.8 993.7,270.9 982.8,269.1 975.6,266.4 968.4,269.1 957.5,270 950.3,272.8 943,269.1 935.8,267.3 928.6,261 919.5,261.9 914.1,259.2 903.2,261 894.2,261.9 890.6,266.4 879.7,268.2 872.5,267.3 865.2,269.1 861.6,272.8 864.3,275.5 864,277.4 862.5,279.1 864.5,284.1 866.3,287.8 865.4,287.6 863.6,288.4 862,288.4 860.8,289 853.4,287.2 848.4,286.5 848.9,284.5 847.2,284.1 846.7,282.8 844.6,283 843.4,282.4 842.7,281 841,280.4 840.9,279.1 838.9,279.4 838.5,277.9 844.7,276.1 845.9,271.7 838.5,269.3 832.4,265.6 831.1,265.1 829.7,265 828.7,264.3 827.4,260.6 821.3,257.6 819.8,256.3 820.3,254.1 821.1,252.3 818.8,252 820,250.8 820.5,249.1 822.7,247.9 823.7,246.5 827.4,242.8 824.4,237.2 822.5,232.3 821.3,228"/>
<polygon fill="#5aaa5a" stroke-width="1.8" points="870.7,223 871.6,222.1 872.9,220.3 875.3,220.8 876.1,218.2 878.3,218.7 879.7,216.7 880.8,216 883.1,216.6 884.1,215.9 885.3,215.8 886.8,215.3 889.2,214.7 892.4,213.9 893.5,213.1 895.2,213.1 897.2,213.9 899.1,213.2 900.6,214 902,212.6 903.8,212.5 905.8,213.2 907.5,212.9 909.6,212.1 908.7,213.2 906.8,213.9 905,213.8 903.2,215.6 901.8,216 900.1,215.1 897.7,214.6 896,216.6 894,217.3 892.4,216.7 890.5,216.4 888.8,217.1 887.6,218.6 885.8,217.9 884.7,220.3 882.4,220.3 880.5,221.1 879.5,223.4 877.9,224.8 876.2,224.5 874.7,223.8 873.1,224.7"/>
<polygon fill="#5aaa5a" points="962,205.8 963.3,206 964.1,204.2 966,205.6 968.1,204.3 970.2,204.5 972.1,204.1 974.5,204.9 975.8,205.9 977.9,205.2 979.2,206.3 980.4,205.9 982.2,206.1 983.8,206.4 986,208 987.5,206.9 988.3,207.6 987.1,208.3 984.5,208.6 982.8,209.4 980.9,209.7 979.1,209 977.3,209.6 975,209.6 973.8,208.2 973,207.6 971.8,206.8 970,207.7 968.3,207.8 966.4,208 964.7,207.1 963.7,206.3"/>
<polygon fill="#5aaa5a" points="1057.8,213.9 1058.9,213.9 1060.1,213.3 1062.6,213.1 1064.4,214.4 1065.6,213 1067.8,213 1069.2,214 1071.3,214.5 1072.9,215.1 1074.9,213.9 1076.8,214.9 1075.4,216 1073.1,215.4 1071.3,216 1069.6,216.5 1067.8,217.2 1066.4,216.7 1064.8,217.2 1063,216.4 1061.7,215.7 1059.7,216.1 1059.6,214.8"/>
<polygon fill="#5aaa5a" points="1069.6,261.9 1071.4,262.8 1071,264.6 1072.5,266 1072.9,267.8 1072.3,270 1072.8,272 1073.9,273.9 1075,274.6 1074.3,275 1072.3,275.5 1072.3,277.2 1071.7,279 1070.5,280.9 1069.1,280.6 1068.7,279.1 1069.5,278.3 1069.9,276.9 1069.7,275.4 1070.1,273.9 1069.6,271.8 1069.4,270.1 1069.7,268.6 1069.2,267.4 1068.7,266.4 1069.8,264.9 1069.8,263"/>
<polygon fill="#5aaa5a" stroke-width="1.8" points="769.5,244.6 770.9,245 772.4,243.2 773.4,241.4 775.4,242.3 776.9,240.9 777.9,240.2 778.9,239 780.7,238.9 783,238.6 784.3,237.2 784.6,235.3 786.5,234.8 788,232.3 788.5,230.7 790.5,230.1 792,230 794.1,228.6 795.7,228.6 796.8,227.8 799.3,228.4 800.3,226.1 802.9,226.4 804,226.1 804.9,225.2 807.4,225.6 809.1,225.2 810.2,223.8 811.5,223.5 813.9,224.3 815.7,224.1 817.6,224.1 819.4,225.3 820.9,225.1 823.7,225.5 825.4,225.8 826.2,227.3 821.3,228 815.1,227.3 810.2,229.2 804,231 796.6,232.9 791.7,236 788,240.9 786.1,245.8 784.3,250.8 782.3,249.7 781.7,252.5 779.3,252 778.2,252.6 777,252.5 775.1,251.5 773.2,252.6 771.8,252.5 772.1,250.6 770.1,249.5 769.8,248.5 769.6,247.3"/>
<polygon fill="#5aaa5a" points="786.1,245.8 788,240.9 791.7,236 796.6,232.9 804,231 810.2,229.2 811.4,234.7 810.8,235.4 808.9,237.8 807.6,238.2 805.5,238.9 804,239.1 802.9,239.7 801.2,241 800.3,243.1 799.1,242.8 798.8,244.9 796.6,245.8 797.6,247 798.5,248.3 798.3,249.6 796.1,250.6 795.4,252 794.9,252.7 795.5,254.7 794.1,256.3 793,256.6 791.2,258.4 789.2,258.2 789,257.2 786.5,256.1 786.1,254.5 784.8,253.4 784.9,250.8"/>
<polygon fill="#5aaa5a" points="810.2,229.2 815.1,227.3 821.3,228 822.5,232.3 824.4,237.2 827.4,242.8 823.7,245.8 822.7,246.4 819.9,246.1 818.8,247.7 817.2,247.3 815.1,249.8 813.9,248.3 812.6,248.1 810.1,247.9 808.9,247.1 808.8,245.4 806.5,244 806.1,242.5 808.8,241.8 808.9,239.7 809.9,238.3 812.6,239 813.2,237.5 814.5,237.2 812.7,237.2 812,236.4 811.4,234.7"/>
<polygon fill="#5aaa5a" points="776.3,256.3 777.4,255.4 778.4,254.5 780.6,253.9 781.8,254.2 782.4,256.9 783.2,258.7 784.9,257.6 784.3,259.4 783.4,259 781.3,259.8 779.3,260 778.1,259.5 776.9,259.4 775.7,258.5"/>
<polygon fill="#5aaa5a" points="742.8,252.8 743.5,254 743.9,255.5 745.2,256.6 746.6,256.9 748.9,259 749.9,260.9 751.8,261 753.9,262.4 756.5,261.5 756.9,259.6 755.5,259.3 753.5,258.9 753,257.1 753.4,255.9 755.6,256.4 755.7,255.2 755.2,253.6 753.4,253.2 753.8,251.8 751.8,252 750.2,251 747.9,251.4 746.9,252.4 744.5,251.2"/>
<polygon fill="#99cf99" points="749.7,263.7 751.7,264.3 753.4,263.7 752.8,266.8 751.3,265.7 749.7,266.2"/>
<polygon fill="#5aaa5a" points="736.2,261.9 737.1,261.1 739.6,261.3 741.1,260 746,260 746.3,261.9 745.4,264.3 744.5,265.7 742.7,265.4 741.1,266.8 739.3,266.9 737.7,266.7 736.8,266.2 735.4,265.4 735.6,263.7"/>
<polygon fill="#99cf99" points="743.6,259.4 744.7,258.5 745.5,257 746.7,258.8 747.3,260.6 744.2,261.3"/>
<polygon fill="#f2f7f2" points="742.3,243.6 743.9,244.1 744.8,244.4 743.8,245.5 742.9,244.8"/>
<polygon fill="#f2f7f2" points="755.3,247.7 756.5,248.3 756.2,250.2"/>
<polygon fill="#5aaa5a" points="740.5,288 745.4,288.4 744.8,293.9 744.2,298.3 743.3,299.2 741.1,298.3 740.3,296.7 739.3,295.2 739.4,294.2 740.5,292.6 740.5,291.5 740.7,289.8"/>
<polygon fill="#5aaa5a" points="767,266.2 768.3,264.9 770.7,263.7 772,263.6 773.8,264.3 773.8,269.3 770.7,269.9 766.4,268"/>
<polygon fill="#3a8a3a" points="776.3,276.7 781.8,276.7 781.8,278.5 777.5,279.1 775,278.5"/>
<polygon fill="#5aaa5a" points="781.8,276.1 788,274.8 789.5,275.5 791.6,275.2 792.9,275.4 792.4,276.5 792.3,277.9 788,279.1 783,278.5 783.1,277.2"/>
<polygon fill="#3a8a3a" points="787.4,297 788.5,297.8 790.2,297.2 791.7,295.9 792.9,296.4 793.6,297.6 792.6,298.6 792.3,299.5 791.1,298.8 788.6,298.9 788,298"/>
<polygon fill="#3a8a3a" points="776.9,289 778.4,288.3 779.3,288.4 781.1,290.2 780.5,291.7 780,293.9 777.5,294.6 777.5,293 776.2,290.5"/>
<polygon fill="#3a8a3a" points="777.5,284.7 779.1,284.3 779.9,285.4 779.1,287.8 777.7,287.8 777.3,286.6"/>
<polygon fill="#5aaa5a" points="791.1,263.1 792.5,261.9 795.1,262.5 796.6,261.3 798.3,260.8 799.5,262 801.9,260.7 804,261.3 809.6,262.5 809.7,263.8 810.3,265.2 810.8,266.8 808.9,271.1 804,271.7 799.1,270.5 794.1,269.9 792.8,269.1 790.4,268"/>
<polygon fill="#5aaa5a" points="787.4,269.9 788.2,270.7 790,269.9 792,270 794.1,269.9 799.1,271.1 795.4,273.6 793.5,272.4 792.3,272.7 790.4,273.6 788.6,272.4"/>
<polygon fill="#99cf99" points="795.4,273.6 799.1,271.1 808.9,271.7 808.6,273.3 807.7,274.2 806.7,274.5 804.8,275.5 804,276.1 802.4,276.7 800.1,277.8 799.1,277.9 794.1,277.3 794,276.2 792.9,275.4 793.6,274.9"/>
<polygon fill="#c5e3c7" points="806.5,250.8 807.6,252.5 809.8,250.1 811.5,249.6 813.9,250.2 815.2,251.4 817.6,250.7 818.8,252 818.2,254.5 808.9,254.5 807.4,254.2 807.7,251"/>
<polygon fill="#c5e3c7" points="805.9,255.1 818.2,254.5 818.6,255.4 819.7,257.5 821.3,257.6 815.1,258.2 806.5,257.6"/>
<polygon fill="#99cf99" points="805.9,258.2 815.1,258.2 817,261.3 811.4,262.5 805.9,261.3 806.3,259.4"/>
<polygon fill="#c5e3c7" points="815.1,258.8 821.3,258.2 827.4,260.6 828.7,264.3 827.4,265.7 825,266.8 816.3,266.2 814.9,265.3 813.6,265.5 811.4,265.6 811.7,264.6 810.8,262.5 817,261.3"/>
<polygon fill="#99cf99" points="810.2,268 811.2,268.3 812.3,266.6 814.9,267.3 816.3,266.2 825,266.8 825.8,266.2 828.2,267 829.3,265.9 831.3,265.5 832.4,265.6 838.5,269.3 845.9,271.7 844.7,276.1 838.5,277.9 836.7,278 834.8,279.1 833.1,279.3 831.8,279.3 830.2,279 828.7,278.5 828.3,280 827.4,281.6 825.9,280.4 823.7,279.1 821.9,276.1 816.3,274.2 810.2,274.2 808.9,274 808.3,272.4"/>
<polygon fill="#dff0e0" points="819.4,274.8 822.5,275.4 823.1,278.5 821.3,277.9"/>
<polygon fill="#99cf99" points="805.2,277.3 806.6,276.4 808.1,276.2 809.2,274.6 810.2,274.2 816.3,274.2 821.9,276.7 823.7,279.8 822.1,280.5 821.3,282.8 815.1,283.5 813.9,283.3 812.3,282.2 810.6,282.6 808.9,282.2 805.9,279.8 805.9,278.8"/>
<polygon fill="#c5e3c7" points="808.9,284.1 810.2,284.7 812.8,284.7 813.9,284.6 815.1,284.1 821.3,283.5 820.4,284.7 820.1,286 820.7,287.8 815.1,289 814,288 812.2,288.1 809.6,287.8"/>
<polygon fill="#99cf99" points="801.5,280.4 802.4,280.4 803.7,281 805.9,279.8 808.9,282.2 808.9,287.8 805.2,289 805.2,287.5 803.7,286.5 802.8,285.3"/>
<polygon fill="#c5e3c7" points="788,279.8 794.1,277.3 799.1,278.5 800,279.2 801.5,280.4 802.8,285.3 800.9,287.2 799.3,286.9 798.8,285.2 797.2,284.7 796.3,284.1 794.1,282.2 792.7,281.7 791.5,282 790.4,281.6 788.5,281.2"/>
<polygon fill="#99cf99" points="802.2,287.8 804,287.6 805.2,289 808.9,288.4 808.5,289.2 808.3,290.9 804,292.1 802.8,291.3 802.8,290.2"/>
<polygon fill="#5aaa5a" points="804,292.1 808.3,290.9 809.7,291.1 811.8,290.4 813.9,289.6 816.3,291.5 814.8,291.7 813.5,292.1 811.4,293.3 809.9,294 810.2,296.4 810.3,297.8 812,300.1 810.8,300 808.9,300.7 808.3,299.1 806.5,297.6 805.2,296.3 804.6,295.2 803.6,294.6"/>
<polygon fill="#5aaa5a" points="810.2,302.6 811.4,303.2 813.7,303.2 815.3,301.9 816.3,302.8 816.1,303.8 815,303.5 813.2,303.5 812.1,303.2 810.4,303.6"/>
<polygon fill="#5aaa5a" points="818.2,292.1 823.7,290.2 824.6,289.5 826.5,289.2 828.5,289.1 831.1,289 832.6,288.4 833.9,289.2 836.1,290 837.4,289 839.6,289.9 841,289.6 842.1,289.4 844.6,290 847.2,289.7 848.3,290.1 849.6,290.9 855.8,290.2 858.3,293.9 857.8,295.9 855.8,297 854.6,297.3 853.3,297.4 851.9,297.3 850.4,297.2 848.4,298.3 846.9,298.1 845.1,297.8 843.6,299.5 842.3,299.3 841,298.9 839.2,299 837.6,299.5 836.1,300.1 834,300.4 832.7,300 831.1,298.9 829.7,299 828.5,300.1 826,299.4 825,300.1 823.7,298.5 822.2,297.8 820,297.6 820.3,295.9 817.6,295.2 818.4,293.5"/>
<polygon fill="#5aaa5a" points="815.1,289.6 820.7,288.4 821.6,289.1 821.3,290.9 816.3,291.5"/>
<polygon fill="#99cf99" points="831.1,302.6 832.8,302.4 834.8,301.3 834.2,303.2 832.7,302.1"/>
<polygon fill="#c5e3c7" points="848.4,286.5 853.4,287.2 860.8,289 859.5,290.9 855.8,290.2 849.6,290.5 849.6,288.6"/>
<polygon fill="#c5e3c7" points="855.8,290.5 860.8,289 862.1,289.9 863.4,289.4 865,290.6 866.9,290.2 870.6,293.9 866.9,296.4 866.3,295.7 864.5,294.3 862,293.9 860.5,294.6 858.3,293.9"/>
<polygon fill="#276a27" points="772.4,268.4 773.3,271.9 776.6,272.7 777.7,274.5 777,275.5 779.1,275.6 780.3,276.5 786.5,276.1 788.6,272.6 787.8,270 789.5,269.1 790.9,268.1 790.4,262.6 789.1,262.6 786.9,260.3 785.4,261.7 783.3,262.4 781.2,261 780.1,260.8 779,261.1 778.4,263 776.8,264.1 775,264.1 774.3,264.6"/>
<polygon fill="#276a27" points="753.7,262.8 753.7,265.9 753.4,267.7 753.2,268.8 754.3,268.5 756.1,268.8 757.2,269.4 758.9,269 760.4,268 761.6,266.7 763.6,265.7 763,264.8 761.7,263.8 761.1,262.8 759.7,262.6 757.4,262.5 756.9,260.8"/>
<polygon fill="#3a8a3a" points="775.1,280.5 776.1,283 777.5,284 778.6,284.3 779.6,285.5 781.9,285.6 783.2,286.5 785.1,287.9 786.3,288.8 787.1,289.8 788.3,290.7 788.1,292.7 791,292.2 791.5,293.9 792.3,294.9 793.6,296.3 793.3,297.6 795.5,296.3 794.9,295.2 795.5,293.6 797.5,295 798.5,293.5 800,292.7 798.3,292.4 796.9,291.7 795.1,291.1 794.2,288.4 793,288.5 791.5,288.3 791.1,286.6 790.4,285.6 788.9,285.3 787.9,284.2 787.8,282.6 786.7,282.4 787.3,281.6 788.8,280.7 787.2,279.1 782.9,278.2 778.7,278.7"/>
<polygon fill="#3a8a3a" points="748.5,274.8 749.8,274.8 751.6,274.7 753.5,273 754.7,273 755.6,272.7 756.4,270.8 759,269.9 760.5,269.9 761.8,269.5 762.7,269.3 764.2,268.9 765.8,267.4 770.7,269.3 775,271.1 776.3,275.4 774.4,279.1 775.6,283.5 774.3,283.8 773.2,285.9 772.1,285.7 770.9,286.4 769.4,286.2 768,287.1 767,287.2 762.1,286.5 756.5,284.7 757,283.6 756.5,281 757.1,279.8 755.8,278.5 754.3,277.7 754.1,276.7 752.7,277.2 750.9,275.8"/>
<polygon fill="#3a8a3a" points="739.9,285.9 741,285.5 742.4,285.3 744.7,285.1 746,285.3 747.7,284.6 749.9,285.1 752.3,285.1 754.4,284.4 755.7,285.2 756.5,284.7 762.1,286.5 765.8,287.8 764.4,287.6 763.2,290 762.1,291.5 761.3,293.3 759.2,293.6 759,295.2 758.6,296.9 757.7,298.2 756.5,298.3 755.1,297.9 754.2,299.6 752.2,299.5 750.5,298.5 748.8,300.5 746.7,300.1 745.6,299.2 744.2,298.3 744.8,293.9 745.4,288.4 740.5,288"/>
<polygon fill="#99cf99" points="745.3,300.9 747.2,301.2 749,300.5 750.1,301.9 752.5,300.8 753.5,302.1 755.2,301.1 756.2,301.8 755.3,309.9 747.1,314.4 740.8,317.1 740.6,318.4 739.2,319 738.6,320.2 737.2,321.7 733.6,323.5 730.9,332.5 722.7,333.4 723.8,332.9 723.9,331.2 725.1,329 725.4,328 725.9,327 726.1,325.6 728.5,324.3 729,322.6 730.6,321.5 731.2,320 732.8,319.7 734.5,317.1 735.9,315.8 736.3,314.2 737.3,312.9 737.6,311 738.1,309.9 738.7,308.7 740.8,307.5 743.5,306.3 743.9,305.5 744.3,303.2"/>
<polygon fill="#99cf99" points="756.2,301.8 757.2,302 759.3,299.8 760.7,300.6 762,300.2 764.2,301 766.2,300.2 767,300 768.7,300.3 770.4,300.4 772.2,300.5 773.7,300.7 776.3,299.9 777.9,300 780.6,305.4 778.8,311.7 781.5,317.1 779.7,323.5 784.2,328.9 774.3,334.3 767.9,337.9 761.6,333.4 750.8,326.2 749.9,324.5 747.9,324 746.6,321.6 746,320.6 743,320.2 741.5,318.7 740.8,317.1 747.1,314.4 755.3,309.9"/>
<polygon fill="#c5e3c7" points="777.9,300 778.9,299 780.6,300 782.4,299 783.1,300.1 782.7,302 784.2,303.6 783.6,305.3 783,306.3 782.4,307.2 783.8,308.4 784.2,309.9 781.5,317.1 778.8,311.7 780.6,305.4"/>
<polygon fill="#c5e3c7" points="784.2,309.9 785,310.2 786.6,310 787.6,311 789.5,311 791.2,310.7 792.4,311.7 793.6,312.7 795.5,313.1 797.2,312.3 799.6,313.5 800.7,312.2 803.1,311 804.2,310.4 805,309 806.9,309.3 808.5,308.6 810,309.9 811.2,311 814.1,309.9 814.1,335.2 810.5,336.1 792.4,328.9 784.2,328.9 779.7,323.5 781.5,317.1"/>
<polygon fill="#5aaa5a" points="814.1,311.7 815.3,310.9 817.9,312.5 819.8,311.8 821.3,311.7 822.8,311.4 825.4,311.2 827.7,313.1 830.4,312.6 831.2,313.6 833.4,313.9 834,315.3 835,316.4 832.5,318.1 833.1,319.9 830.4,315.3 835.8,324.4 836.4,325.6 837.4,327.7 838.2,330.1 839.4,331.6 814.1,332"/>
<polygon fill="#f2f7f2" points="722.7,333.4 730.9,332.5 733.6,323.5 735.3,322.7 737,322.2 739,323 740.8,322.6 743.5,322.6 746.2,344.3 744.8,343.8 743.5,343.8 741.8,345.4 739.8,344.5 738.1,345.6 737,345.3 735.7,344.1 733.6,345.8 732.3,345.8 730.9,345.2 729.6,344.7 727.2,342.5 725.8,342.5 724.4,342.6 723.6,343.4 723.8,342.5 722.7,340.5 723.6,338.6 722.9,336.2 723,334.9"/>
<polygon fill="#dff0e0" points="743.5,322.6 744.4,323.1 746.2,323.4 747.6,325.1 749.8,326.1 750.8,326.2 761.6,333.4 767.9,337.9 767,344.3 759.8,347.9 750.8,349.7 749.4,350.1 748.3,352.5 747.4,354.1 745.3,355.1 744.1,354.1 741.5,356.1 739.9,354.2 734.5,347.9 735.3,347.5 736.9,346.9 738.1,346.9 740.1,347.1 741.7,345.2 743.4,345.9 746.2,344.3"/>
<polygon fill="#f2f7f2" points="767.9,337.9 774.3,334.3 784.2,328.9 792.4,328.9 793.3,337 789.7,347.9 788.6,348.5 788.7,350.1 788.8,352.4 779.7,350.6 772.5,350.6 767,352.4 760.7,348.8 767,344.3"/>
<polygon fill="#f2f7f2" points="792.4,328.9 810.5,336.1 810.5,344.3 807.8,349.7 810.5,356 805,359.7 796,363.3 795.5,361.8 794.1,360.8 791.7,360.6 791.5,358.8 791.5,357 792.9,355.1 792.4,353.3 792.8,352.2 792.2,350.7 790.3,349.8 789.7,347.9 793.3,337"/>
<polygon fill="#c5e3c7" points="814.1,332 839.4,331.6 840.9,333 840.9,335.4 840,337.9 841.2,340.7 839.4,347.9 837.6,353.3 833.1,359.7 835.8,366 835.9,367.4 834,369 832.7,369.6 832.2,371.4 830.2,372.2 828,371.9 825.5,371.7 823.1,371.4 817.7,367.8 810.5,356 807.8,349.7 810.5,344.3 810.5,336.1 814.1,335.2"/>
<polygon fill="#f2f7f2" points="841.2,340.7 841.8,341.3 843,342.6 844.2,343.3 844.8,344.3 845.6,345.9 847.5,347.1 849.1,348.9 850.3,349.7 846.7,348.8 839.4,347.9"/>
<polygon fill="#c5e3c7" points="839.4,347.9 846.7,348.8 847.2,349.7 849.1,349.7 849.5,351.4 851.1,351.1 852.1,352.4 851.8,353.8 852,355.3 853,356 862.9,361.5 857.5,367.8 850.3,370.5 843,369.6 842,369.1 840.4,368.1 839.3,367.6 837.7,367.4 835.8,366 833.1,359.7 837.6,353.3"/>
<polygon fill="#f2f7f2" points="853,356 854.9,355.5 857.1,354.5 858.4,354.7 859.7,354.8 861.1,354.2 863.3,355 864.5,354.2 865.5,353.5 867.4,353.7 868.6,354.1 870.2,353.3 869.7,354.2 869.4,356 870.7,358.2 868.4,359.1 867.4,360.5 868.4,362.4 867.5,363.9 866.9,365.1 865.4,366 865.1,367.5 862.9,368.9 862.5,371.5 861.1,372.3 860.5,373.9 859.5,375.8 857.6,376.6 855.4,377.8 854.7,380.2 853.3,380.8 852.1,382.3 851.5,381.5 849.4,380.5 849.4,373.2 850.7,372.1 852.1,371.5 854.2,371.1 855.3,369.3 856.8,368.6 857.5,367.8 862.9,361.5"/>
<polygon fill="#99cf99" points="835.8,371.4 837.7,370.8 840,370.9 841.4,370.4 843,369.6 850.3,370.5 849.5,371.6 849.4,373.2 849.4,380.5 848.3,382.2 847.2,384.2 847,385.8 844.8,387.7 835.8,381.4 834.7,380.4 833.3,379.7 833.1,378.7 835.8,375 835.9,373.8"/>
<polygon fill="#c5e3c7" points="826.7,373.2 827.6,372.7 828.7,372.6 830.7,372.6 833.1,372.3 833.8,372.7 834.7,373.6 835.8,375 833.1,378.7 831.8,378.9 830.1,380.1 827.3,379.5 826.7,380.5"/>
<polygon fill="#c5e3c7" points="826.7,383.2 828.1,382.5 829.3,382.4 831.7,382.9 833.1,381.5 835.8,381.4 844.8,387.7 845.3,389.8 843.9,390.9 843.3,392.2 843.9,394.9 844.5,396.7 845.6,398 846.5,400.2 845.7,402.3 846.7,403.1 837.6,405.8 832.2,402.2 826.7,397.7 824,391.3"/>
<polygon fill="#c5e3c7" points="824,382.3 825.8,382.8 826.7,383.2 824.9,388.6 823.1,387.7"/>
<polygon fill="#c5e3c7" points="799.6,370.5 806.8,369.6 817.7,367.8 823.1,371.4 823.8,372.2 825.2,372.7 826.7,373.2 826.7,380.5 825.5,382.3 824,382.3 824,391.3 826.7,397.7 823.1,400.4 824,407.6 818.6,405.8 814.1,405.8 810.5,398.6 803.2,397.7 797.8,394 792.4,394 792.9,393.1 793.1,391.7 794,390.6 794.2,388.6 797.8,382.3 799.6,376.8"/>
<polygon fill="#f2f7f2" points="789.7,378.7 791.6,379.3 792.4,376.5 794.3,374.8 796,374.1 799.6,370.5 799.6,376.8 797.8,382.3 794.2,388.6 792.2,388.1 791.1,389.3 788.8,389.5 787.3,389.4 786.6,386.7 785.1,387.7 789.7,384.1"/>
<polygon fill="#dff0e0" points="779.7,378.7 781.2,378.2 782.5,377.8 784.7,377.4 786.4,378.5 789.7,378.7 789.7,384.1 785.1,387.7 784.3,386.8 782.2,385.8 781.5,384.1 781.4,382.7 779.4,381.7"/>
<polygon fill="#c5e3c7" points="779.7,367.8 785.1,362.4 789.7,352.4 789.4,353.7 790.1,355.6 791.3,357.9 791.5,358.8 791.5,360.3 793.4,361.4 791.2,363.1 792.6,364.2 792.4,366 796,373.2 795,373.2 793,374.3 790.6,375 789.7,375.9 788.8,375.3 787.3,375.9 785.3,375.3 784.1,375.2 782.8,375.5 780.6,375 780.6,373.5 780,371 779,369"/>
<polygon fill="#f2f7f2" points="796,363.3 805,359.7 810.5,356 817.7,367.8 806.8,369.6 799.6,370.5 796,373.2 792.4,366 793.3,365.2 794.7,363.8"/>
<polygon fill="#99cf99" points="767,352.4 772.5,350.6 779.7,350.6 788.8,352.4 789.7,356 785.1,362.4 779.7,367.8 778.4,368.2 776.7,369.3 775,368.6 774.3,369.6 772.9,369.4 772.9,367.7 770.7,366 769.3,366 767.3,365.1 765.2,365.1"/>
<polygon fill="#c5e3c7" points="758.9,355.1 765.2,354.2 766.1,365.1 765.2,365.2 763.8,365.7 762.4,366.2 761.4,366.8 759.8,366.9"/>
<polygon fill="#c5e3c7" points="753.5,356.9 758.9,356 760.2,366.9 758.5,368 756.6,368 755.3,367.6 754.4,368.7 752.6,364.2"/>
<polygon fill="#dff0e0" points="748.9,352.4 749.7,352 750.9,351.9 752.5,350.2 754.7,350.1 756.7,349.6 758.5,349.1 759.8,347.9 767,352.4 766.1,353.9 765.2,355.1 753.5,356.9 749.9,357.8 750.3,356.5 748.7,355.5"/>
<polygon fill="#c5e3c7" points="742.6,359.7 744.5,359.3 746.4,358.4 748.8,358 749.9,357.8 753.5,356.9 752.6,364.2 754.4,368.7 752.9,369.7 750.8,369.1 748.3,369.5 747.1,369.6 745.5,369.5 744.1,369.6 742.6,369.6 742.1,368 742.6,365.8 741.8,364.1 743.4,362.5 743.1,360.8"/>
<polygon fill="#dff0e0" points="727.2,352.4 734.5,349.7 739.9,354.2 741,354.7 740.9,356.7 741.9,358.9 742.6,359.7 742.4,360.9 739.9,362.4 735.4,356.9 730,356.9 729.4,355.2 727.8,353.8"/>
<polygon fill="#f2f7f2" points="730,356.9 735.4,356.9 739.9,362.4 739.9,363.3 740.2,364.9 740.7,366 741.9,368.3 742.6,369.6 742,368.5 739.6,367.8 738.1,366 737.1,365.2 737,363.5 734.2,363.1 732.7,361.5 731.5,360.5 730.8,358.8"/>
<polygon fill="#c5e3c7" points="721.8,345.2 723.7,344.7 726.2,345.2 727.8,345.7 729.6,344.8 730.9,345.2 732.1,345.1 733.3,347.3 734.5,347.9 734,349.1 733.6,350.6 727.2,352.4 725.5,351.5 723.9,351.2 722.7,351.5 723.4,350.5 722.7,348.1 722.1,346.5"/>
<polygon fill="#f2f7f2" points="786.9,394 797.8,394 803.2,397.7 810.5,398.6 814.1,405.8 808.7,407.6 808.7,418.5 799.6,419.4 786,417.6 786.5,416.6 786.4,414.4 786.6,411.8 786,409.4 787.3,408.3 787.3,406 787,404.3 788.5,403.2 789.7,402.2 789.3,400.3 788.5,398.8 787.6,397.4 787.2,395"/>
<polygon fill="#c5e3c7" points="810.5,407.6 818.6,405.8 824,407.6 823.1,400.4 824,399.9 826,400.3 828.6,398.6 832.2,402.2 833.1,409.4 828.6,413 821.3,416.7 815.9,419.4 808.7,418.5 808.7,407.6"/>
<polygon fill="#c5e3c7" points="837.6,405.8 846.7,403.1 846.4,405 847.1,406.1 847.1,408.2 846.5,409.6 848.1,410.9 847.6,413 846.9,414 845.3,415.5 844.3,416.2 842.9,417.7 842.1,419.2 840.1,420.8 839.4,422.1 839.1,423.5 838.2,424.4 837.7,425.5 837,426.7 835.8,427.5 835.5,429.1 835.6,431.1 836,432.6 835.8,434.7 834.5,434.8 832.1,435.7 831.3,436.6 830.8,435.3 831.7,433.7 832.7,432 832.9,430.5 832.2,429.3 832.1,428.4 831.4,427.3 830.1,425.1 830.4,423.9 835.8,416.7 833.1,409.4 832.2,402.2"/>
<polygon fill="#c5e3c7" points="828.6,405.8 833.1,404.9 835.8,416.7 833.1,420.3 832.5,419.3 831.4,418.6 830.4,416.7 828.6,413"/>
<polygon fill="#c5e3c7" points="815.9,419.4 821.3,416.7 828.6,413 830.4,416.7 830.3,417.8 831.2,420.2 830.4,421.6 830.4,423.9 829.3,424.2 829,426 827.3,426.4 825.6,427.9 824.9,428.4 819.5,425.7"/>
<polygon fill="#c5e3c7" points="804.1,421.2 808.7,419.4 815.9,419.4 819.5,425.7 824.9,428.4 817.7,432.9 810.5,436.6 804.1,434.7"/>
<polygon fill="#c5e3c7" points="786,417.6 799.6,419.4 808.7,418.5 804.1,421.2 804.1,434.7 804.6,436.1 803.2,437.8 803.3,439.6 802.3,442 800.4,441.8 798,443 796,442 796,440.1 794.7,439.3 794.5,437.2 794.3,436 793.3,435.3 791.7,434.5 790.6,432.8 790.6,431.1 790.5,430 788.9,428.3 788.5,427 788.3,424.8 786.9,423 787.5,421.4 786.1,420.1"/>
<polygon fill="#5aaa5a" points="796.3,443.4 797.9,443.2 800.3,443.6 803.2,442.9 801.9,441.3 803.7,439 805.2,438.8 805.4,437 807.9,436.4 808.6,435.5 814.6,434.6 819.5,430.6 824.4,429.1 825.8,429.6 827.6,430.2 828.4,430.6 827.9,432.2 828.9,433.5 829.1,435.6 828.4,436.5 830.3,437.1 831.3,438.5 830.1,440 830.3,441.5 829.8,442.7 828.5,444 827.4,445.9 826.4,446.4 824.6,447 824,448.7 823.3,450.9 821.7,451.9 820.5,452.3 819,453.5 816.8,452.9 816.1,454.4 814.8,455.1 813.6,454.8 812,454.5 810.7,454.3 808.9,455.7 806.7,455.3 805.4,456.5 802.7,456.5 801.7,455.9 800.2,454.9 798.8,454.8 799,453.3 798.5,451.6 799.2,450.3 799.3,449.1 797.8,447.4 796.6,446.5"/>
<polygon fill="#dff0e0" points="864.7,406.7 865.9,406.4 867,406.4 868.4,407.6 868.2,408.9 868,410.2 869.7,411.7 869.3,413 868.7,414.8 867.9,416.6 866.9,418.3 867,419.7 867,421.3 866.5,422.7 866.6,423.9 865.7,425.4 864.9,427.1 864.8,428.5 863.4,429.6 863.3,432 862.9,432.9 861.2,432.9 859.9,433.6 859.1,435.2 857.5,435.6 856.4,435.7 854.8,433.6 853.9,432.9 854.5,431.8 853.5,429.3 854.5,427.3 853.9,425.7 854.1,424.8 855.4,422.8 856,421.4 856.3,419.1 856.6,416.7 857.3,415.6 859.4,415.2 860.7,413.8 861.1,413 862.6,412.1 862.8,409.8 863,408.7"/>
<polygon fill="#5aaa5a" points="839.4,311.7 846.7,310.8 847.5,311.1 849.5,312.3 852.1,312.1 854.1,313.6 854.8,315.5 856.9,316.8 859.3,317.1 860,318 862.2,318.4 863.9,318.5 865.6,319.2 866.6,319.9 868.7,320.3 868.2,322.2 868.4,323.8 870.2,325.3 871.3,326.9 873.9,326.9 875.4,327.4 877.4,328.9 880.1,332.5 873.8,336.1 872.4,336.2 871.7,338.2 869.9,338.3 868.4,339.8 862.9,341.6 860.2,344.3 856.6,342.5 854.8,342.3 853,342.5 852.6,340.8 851.6,338.9 851.4,337.7 850.3,336.2 850.3,335.2 850.4,333.9 849.8,332.8 847.3,331.6 846.2,329.3 845.2,328.5 844.8,326.2 843,325.8 843.2,323.1 841.3,322.8 841.7,320.9 839.9,320.2 839.4,318.9 838.4,318.6 838.5,316.9 835.8,315.3"/>
<polygon fill="#c5e3c7" points="853,343.4 854,343 856,343.3 857.2,344.2 859.3,344.6 860.2,344.3 862.9,341.6 868.4,339.8 870.3,339.7 872.6,339.7 874.7,338.9 875.6,343.4 874.8,344.3 872.8,344.4 871.5,345.2 870.4,345.2 868.7,346.2 866.3,346.6 864.7,347.9 863.5,347.8 862,348.3 860.7,349.7 858.6,348.9 857.1,349.5 855.7,350.6 854.9,349.7 854.1,348.6 853,347 853.5,345.1"/>
<polygon fill="#c5e3c7" points="880.1,332.5 883.7,326.2 884.7,327 885.3,327.9 886.9,328.2 888.2,329.2 889.2,330.7 888.5,332.4 887.3,334.3 885.2,335.8 884.6,337 884.4,338 883.3,339.1 881.2,339.3 879.2,341.6 878.1,343.1 876.8,343.6 875.6,343.4 874.7,338.9 874.9,337.8 873.8,336.1"/>
<polygon fill="#99cf99" points="873.8,328.9 875.3,327.4 876.9,327.6 877.8,326.5 879.3,325.7 881.9,325.3 883.7,326.2 880.1,332.5 877.4,328.9"/>
<polygon fill="#99cf99" points="850.3,300 851.6,299.3 854,299.9 855.4,300 857.5,299 862.9,305.4 864.7,311.7 863.4,312.2 862.8,314 860.1,314 859.3,315.3 857.7,314.5 855.8,312.7 853.9,312.6 846.7,310.8 844.8,306.3"/>
<polygon fill="#dff0e0" points="838.5,301.8 839.9,301.4 842.1,300.9 844,301.7 845.2,301.4 847,300.5 848.8,300.7 850.3,300 844.8,306.3 840.3,307.2 839.7,306.4 838.5,305.4 838.3,304.2 838.8,302.9"/>
<polygon fill="#99cf99" points="835.8,308.1 837.4,308.7 839.5,307.5 840.3,307.2 844.8,306.3 846.7,310.8 839.4,311.7 837.6,315.3 835.8,313.5 836.1,312.6 835.8,310.4"/>
<polygon fill="#5aaa5a" points="857.5,295.4 858.7,296.7 861.3,296.9 862.9,297.2 863.7,297.6 865.5,297.8 866.8,300 869.5,300 870.2,300.9 871.5,301.3 873,300.3 874.7,298.8 876.8,297.5 879.2,297.2 888.3,299 888.5,300 890.2,300.7 890.8,302.6 892.3,303.9 892.8,304.9 892.8,306.3 891.9,313.5 898.2,318.9 896.4,324.4 894.5,323.9 892.2,324.5 890.9,323.9 889.1,323.5 887.4,323.7 886.5,323.5 885.4,322.7 883.7,322.1 881.6,321.3 879.2,320.8 878.5,321.9 877.2,322.3 875.1,321.3 873.8,322.6 872.9,321 870.2,319.9 870.1,317.8 868.8,315.7 867.9,315 866.6,313.5 862.9,305.4 857.5,299 858.3,297.9"/>
<polygon fill="#f2f7f2" points="892.1,307.2 893.3,304.9 894.3,303.9 896.4,304.2 897.9,303.3 899.1,302.8 900.2,301.4 901.7,300.7 903.3,299.8 904.9,300 907.2,299.7 914.2,296.7 914.3,298.4 916.5,300.2 914.8,304.9 910.7,309.5 904.9,313 899.1,314.8 893.3,315.3 891.5,310.7"/>
<polygon fill="#5aaa5a" points="893.3,315.3 897.3,318.8 894.4,324.7 896.4,324.6 898.9,324.8 900.2,324.1 901.9,324.5 904.9,324.7 906.5,325 906.5,327.1 909,328.1 913.6,325.8 911.9,320 918.8,315.3 923.5,309.5 921.2,304.9 920.2,304.6 919.5,302.8 917.8,302.8 916.5,300.2 914.8,304.9 910.7,309.5 904.9,313 899.1,314.8"/>
<polygon fill="#c5e3c7" points="864.3,275.5 861.6,272.8 865.2,269.1 872.5,267.3 879.7,268.2 890.6,266.4 894.2,261.9 903.2,261 914.1,259.2 919.5,261.9 928.6,261 935.8,267.3 943,269.1 950.3,272.8 946.7,275.5 940.3,278.2 937.6,282.7 933.1,287.2 931.6,287.5 929.7,287 928,287.7 927,288 924.9,289 917.7,288.1 910.5,290.8 905,289 901.4,284.5 892.4,282.7 886.9,280.9 882.4,282.7 881.5,286.3 880.3,287.4 877.8,286.9 876.1,287.2 875.2,285.5 874.5,283 873.4,281.8 872.8,280.6 874.3,278.2 872.9,278.6 870.3,278.5 868.9,278.2 867.8,278.4 867.3,276.4 866.1,275.4"/>
<polygon fill="#c5e3c7" points="881.5,282.7 886.9,280.9 892.4,282.7 901.4,284.5 905,289 910.5,290.8 908.7,293.6 907.3,293.4 906,294.7 904.8,295 903.2,294.5 899.6,291.7 892.4,289 886.9,288.1 882.4,287.2"/>
<polygon fill="#f2f7f2" points="876.1,291.7 877.2,290.3 878.6,289.2 881.1,288.3 882.4,287.2 886.9,288.1 892.4,289 899.6,291.7 903.2,294.5 901.9,295.7 901.6,297.8 899.6,299 898.6,298.9 896.5,299.6 894.6,299.4 892.4,300.8 885.1,298.1 877.9,297.2 878.2,295.8 877.4,294.8 876.5,292.4"/>
<polygon fill="#dff0e0" points="908.7,293.6 910.5,290.8 917.7,288.1 924.9,289 926.3,289.8 927.9,289 928.6,289.9 922.2,293.6 921.2,294.1 919.8,294.7 918.6,296.3 917.2,296.3 915.9,297.8 914.1,298.1 908.7,297.2 909.2,296.1 909.6,295"/>
<polygon fill="#c5e3c7" points="950.3,272.8 957.5,270 968.4,269.1 975.6,266.4 982.8,269.1 993.7,270.9 1004.5,271.8 1013.6,270.9 1017.2,273.7 1020.8,277.3 1011.8,279.1 1004.5,282.7 997.3,287.2 988.3,289.9 979.2,288.1 968.4,286.3 961.1,282.7 957.5,278.2 953.9,274.6"/>
<polygon fill="#1a5219" points="922.2,293.6 928.6,289.9 929.3,288.7 931.5,288 933.1,287.2 937.6,282.7 940.3,278.2 946.7,275.5 950.3,272.8 953.9,274.6 957.5,278.2 961.1,282.7 968.4,286.3 979.2,288.1 988.3,289.9 997.3,287.2 1004.5,282.7 1011.8,279.1 1020.8,277.3 1017.2,273.7 1012.6,273.7 1017.1,271.8 1020.8,266.4 1026.2,263.7 1033.4,264.6 1037,268.2 1042.5,273.7 1047.9,275.5 1053.3,274.6 1051.5,279.1 1050.7,280.3 1048.6,280.3 1047.9,280.9 1047.7,282.7 1046.8,284.2 1044.3,286.3 1043.4,287.7 1041.2,286.5 1039.9,288.2 1038.9,289 1037.3,288.5 1034.9,288.3 1033.4,289.9 1031.6,290.3 1030.2,291 1028,292.7 1027.3,294.2 1024.4,295.4 1023.1,294.8 1020.9,294.5 1018.9,293.6 1017.8,295.1 1017.1,296.3 1018.7,297.1 1020,298.1 1021.6,298.2 1022.6,298.1 1023.7,297.8 1024.8,299.4 1026.2,299.9 1025.7,300.8 1024.3,301.3 1022.6,301.3 1020.8,302.6 1020.8,304.3 1021,306.4 1021.7,308 1023.1,308.6 1023.5,311.1 1024.2,312.4 1025.3,314.4 1025.4,315.5 1024.8,317.6 1023.7,319.4 1023.5,320.7 1022.7,322.6 1020.9,324.4 1018.8,324.3 1018.9,326.1 1018,326.1 1016.6,326.3 1015.5,327.5 1014.4,328.1 1012.6,328.5 1011.7,329.7 1018.6,325.3 1018.2,326.5 1016.3,328 1013.7,328.1 1012.3,329.8 1011.6,330.3 1009.3,330.3 1007.1,332 1005,332.5 1003,332.3 1001.3,333 999.6,333.4 997.8,333.4 996.7,332 995,330.1 992.4,328.9 985.1,329.8 979.7,331.6 976.1,328 973.4,321.7 969.8,316.2 963.4,317.1 962.2,318.3 960.5,318.2 959.5,319 957.3,318.1 956.2,318.9 954.6,318.6 952.9,317.7 951.6,318 949.4,317.1 947.1,317.1 938.1,314.4 930.9,309.9 931.3,306.2 928.6,302.6 927.7,301.8 927,299.4 925.1,298.8 924,297.2 922.7,296.4"/>
<polygon fill="#1a5219" points="996,337 998,337.2 999.6,336.1 999.5,338.1 1000,338.9 998.6,338.7 996.9,339.8 996.4,338.2"/>
<polygon fill="#5aaa5a" points="1022.2,326.2 1023.3,325.7 1024.9,325.3 1025.4,326.9 1024.9,329.4 1024.6,330.7 1023.6,331.9 1022.2,332.5 1023.1,331.3 1021.3,329 1022.2,327.1"/>
<polygon fill="#5aaa5a" points="921.2,304.9 922.9,303.9 923.9,301.6 924.7,299.7 928.1,302.6 931.6,308.4 933.4,311.3 939.8,315.3 940.9,315.8 942.7,316.2 943.5,318.1 945.6,318.8 946.9,319.9 948.6,319.7 951.4,320.6 952.5,320.4 954.7,319.1 956,320 957.1,319.4 959.2,319.8 960.6,319.5 961.9,318.8 968.8,315.9 971.2,318.3 968.8,321.2 965.3,324.7 963,328.1 961.9,332.8 961.4,331.6 961.1,330.5 959.5,328.1 957.2,324.7 953.7,325.2 953.1,330.5 951.6,331.7 950.5,332.1 950.2,333.4 949,334.3 948.7,335.6 946.9,336.7 945.6,337.4 945.4,338.4 944.3,339.1 943.3,340.2 942.6,342.1 939.8,343.3 938.9,344.7 937,345.8 935.7,345.6 934.6,347 934.5,348.3 934.3,350.1 933.8,351.2 933.9,352.5 933.4,353.7 933.3,354.9 932.7,356.5 932.2,358.5 931.6,359.5 930.9,360.2 930.4,362.2 929.3,362.4 928.2,362 927,360.3 925.8,358.4 925,356.7 924.1,354.5 922.5,352.6 922.3,350.2 922,349.2 921.7,346.8 920.4,345.6 920.6,343.6 920.7,342.4 919.4,340.9 918,339.7 919.3,337.8 919.3,336.6 919.4,334.7 918.3,333.4 917.1,333.5 915.3,334 914.1,332.6 911.3,331.6 909.8,330.9 909.4,328.9 909,328.1 913.6,325.8 911.9,320 918.8,315.3 923.5,309.5"/>
<polygon fill="#99cf99" points="953.1,324.7 957.2,324.7 959.5,328.1 958.3,329.6 958.4,330.5 957,331.6 955.5,331 954.3,331.7 953.1,330.5"/>
<polygon fill="#c5e3c7" points="934.5,315.3 939.8,315.9 940.7,316.2 941.9,317 944.2,316.6 945.6,318.8 946.7,318.5 947.9,320.3 949.7,319.4 950.8,320.6 950.2,321.7 944.4,320.6 938.6,318.3 934,316.5"/>
<polygon fill="#c5e3c7" points="933.4,358.4 934.1,359.2 936.3,359.5 936.8,361.4 938,363 937.4,364.8 936.3,367.1 934,366.5 933.1,365.5 933.8,363.7 932.8,363 932.7,361.8 933,359.2"/>
<polygon fill="#f2f7f2" points="962.5,328.9 965.2,326.2 967,323.5 970.7,318.9 973.4,321.7 976.1,328 978.8,331.6 978,333.5 975.3,333.3 974.3,336.1 973.4,340.7 975.2,346.1 976.1,352.4 974.3,353.3 973.8,351.6 973.5,349.6 973.8,348 972.5,346.1 971.9,344.5 969.8,342.5 969.9,344.4 967.9,346.1 967.7,345 966.6,343.5 965.2,343.4 965.7,342 964.3,340.8 964.9,339 964.3,337 964.1,335.3 962.5,333.4"/>
<polygon fill="#99cf99" points="974.3,336.1 976.2,335.9 976.9,334.4 978.8,334.3 982.4,337.9 987.8,339.8 989.7,344.3 986.9,348.8 983.3,349.7 982.3,350.4 979.7,350.6 979.4,352 977.9,354.2 977.5,356 978.3,357.8 978.8,359.7 979.5,360.6 979.5,362.8 980.1,363.9 981.5,366 978.8,364.2 978.6,362.7 978.4,360 976.5,358.8 976.8,357.8 977,355.7 976.5,354.4 976.1,352.4 975.2,346.1 973.4,340.7"/>
<polygon fill="#dff0e0" points="978.8,331.6 982.4,330.7 986,334.3 989.7,338.9 992.4,344.3 989.7,344.3 987.8,339.8 982.4,337.9 978.8,334.3 979.4,332.5"/>
<polygon fill="#99cf99" points="982.4,330.7 988.8,329.8 990.4,330.3 991.4,331 992.9,331.7 994.2,332.5 993.9,334.3 992.4,335 991.5,337 992.7,338.1 992.5,340.4 994.2,342.5 994.8,343.4 995.9,344.6 997.6,346.4 997.8,347.9 999.3,349.2 997.2,350.8 997.8,353.3 996.7,353.7 995.5,354.7 994.9,355.9 994.4,357.6 993.3,357.8 992.8,359.4 989.7,358.8 991,357.2 991.3,355.5 992.4,354.2 995.1,349.7 992.4,344.3 989.7,338.9 986,334.3"/>
<polygon fill="#dff0e0" points="983.3,349.7 986.9,348.8 989.7,344.3 992.4,344.3 995.1,349.7 992.4,354.2 991,355.3 988.4,354.9 987.8,356 987.4,354 984.2,354.2 985,352.4 983.7,350.8"/>
<polygon fill="#5aaa5a" points="978.8,364.2 981.5,366 982.2,367.6 983.4,369.4 985.1,370.3 985.1,372 986,372.3 986.2,374.2 986,375.8 986.9,376.8 985.7,376.3 983.3,375.9 982.1,375 981,372.9 981.1,371.2 980.6,370.5 979.5,369.5 978.8,367.3 979.7,365"/>
<polygon fill="#99cf99" points="967,367.8 968.4,368.7 970,369.1 972.5,368.7 973.4,369.6 975.9,370.7 976.9,373 978.3,373.6 979.7,375 981.6,375.1 981.4,378.1 982.7,379.3 985.2,380 986,382.3 986.5,383.7 988.7,384.3 989.3,385.3 990.3,385.9 990.6,386.8 990.2,388.2 991.4,389.7 990.6,392.2 989.1,392.4 987.9,393.4 986.9,393.1 986.2,392.6 985,390.3 983.1,390.4 982.8,388 981.5,387.7 980,386.7 979.7,384.8 978.4,383.8 976.6,382.5 975.7,380.7 975.2,379.6 975,378.2 973,378.2 972.3,376.8 971.2,374.9 969.8,373.2 970,372.1 968.8,371.2 966.9,369.6"/>
<polygon fill="#99cf99" points="989.7,394 991.2,393.7 992.3,394.1 994.8,393.8 996,394.9 997.8,394.6 999.4,396.3 1000.9,395.5 1002.4,395.2 1003.8,395.9 1005.3,396.9 1006.8,396.7 1007.8,396 1009.2,397.6 1011.6,397.2 1013.4,397.2 1015,397.6 1017.7,398.2 1019,398 1020.6,398.1 1023.1,398.2 1025.2,397.9 1027.7,398.6 1026.7,400.4 1025.6,400.3 1023.1,400.1 1021.5,400.3 1018.9,401 1017,400.1 1015.9,400.4 1014.8,399.9 1012.6,399.5 1010.8,398.7 1009.2,399 1006.6,398.9 1005,398.6 1003.1,399.3 1000.8,398.6 998.8,398.2 997.1,397.1 996,397.7 995,397.6 993.7,398.3 992.1,395.2 989.7,395.8"/>
<polygon fill="#99cf99" points="996.9,378.7 997.4,377.5 999.2,376.7 1000.5,375 1001,373.9 1002.6,373.7 1004.1,374.1 1005,372.1 1006.8,372.3 1008,370.9 1009.6,369.6 1011.4,367.8 1012.5,366.9 1013.7,365.5 1014.1,364.2 1015.2,364.9 1017.1,366.1 1018.6,366.9 1019.4,367.5 1019.5,369.6 1019,371.1 1016.8,372.3 1017.7,373.9 1017.7,376.8 1016.3,377.4 1015.9,379.7 1015.2,381.8 1014.1,382.3 1013.9,383.6 1012.8,385.7 1011.3,386.4 1012,388.3 1010.5,388.6 1009.3,387.4 1008,387.5 1005.9,387.1 1005,386.8 1004.2,386.4 1002.6,384.8 1000.1,385.1 999.6,384.1 999.2,382.2 997.4,381.4 997.2,380.4"/>
<polygon fill="#5aaa5a" points="1000.5,375 1001.9,374 1003.3,373.3 1005.6,372.4 1006.8,372.3 1008.3,371.9 1008.2,369.7 1010.8,369 1011.4,367.8 1012.8,366.4 1014.1,364.2 1015.4,364.6 1016.2,365.5 1017.4,366.8 1018.6,366.9 1018.5,368.3 1019.5,369.6 1018.6,370.6 1016.8,371.4 1012.3,371.4 1008.7,375 1003.2,377.8"/>
<polygon fill="#99cf99" points="1020.4,378.7 1022.4,378.5 1024,378.5 1025.8,377.9 1027.8,377.3 1028.6,376.8 1029.8,376.2 1031.1,377.5 1032.2,377.8 1031.1,379.3 1029.6,379 1028.2,379 1026.7,380.5 1025.6,381.1 1023.7,381 1023.1,382.3 1024,383.4 1025.1,385.4 1026.7,385.9 1026.5,387.6 1027.4,389.3 1027.9,390.4 1028.6,391.3 1026.9,391.6 1025.8,390.4 1025,389.2 1023.2,388.7 1023.1,386.8 1022.3,387.6 1022.2,389.8 1021.3,391.3 1020.5,390.7 1019.1,390.4 1020,388.9 1018.8,387.5 1019.7,385 1019.5,384.1 1019.3,382.4 1020.9,380.4"/>
<polygon fill="#99cf99" points="1021.3,340.7 1023.1,340.1 1025.8,339.8 1026.5,340.8 1027.2,342.5 1026.7,344.3 1026,345.4 1025.3,347.6 1024,347.9 1024.7,349 1025.6,350.2 1025.8,352.4 1023.9,351.8 1023.1,352.4 1022.8,351.4 1022.6,350.2 1022,349 1021,347 1021.5,346.1 1021.1,343.8 1020.6,342.4"/>
<polygon fill="#99cf99" points="1026.7,349.7 1028,349.5 1029.7,350.8 1031.3,350.6 1032.2,351.2 1033,353.6 1034,355.1 1033.3,355.8 1033.6,358.4 1033.1,359.7 1034.2,360.2 1035.8,362.4 1036.1,364.3 1034.9,366.9 1033,367.3 1031.3,366 1030.1,365.1 1028.8,363.7 1028.6,362.4 1027.4,364 1025.8,364.2 1026.1,363.1 1025.8,361.7 1026.7,359.7 1027.7,358.1 1028.6,356 1027.4,355.3 1025.8,353.3 1026,351.9 1026.5,350.8"/>
<polygon fill="#99cf99" points="1015,361.5 1015.4,359.9 1018.1,358.9 1019.2,357.2 1019.5,356 1020.4,356.9 1019.2,357.6 1018.8,359 1018.1,360.7 1016.3,362.4"/>
<polygon fill="#99cf99" points="1037.6,376.8 1039,376.9 1040.3,375.9 1040,376.7 1039.8,378.9 1040.1,380.3 1039.4,381.4 1038.7,380.9 1037.2,380.5 1036.4,378.9"/>
<polygon fill="#99cf99" points="1028.6,399.5 1029.8,398.6 1031.5,398.5 1033.3,398.5 1034.5,396.8 1035.8,396.7 1036.7,398.2 1035.5,399.4 1033.3,399.9 1032.7,401.9 1030.5,401 1030.4,402.5 1030.4,401.3"/>
<polygon fill="#99cf99" points="1044.8,395.8 1046.4,397.5 1047.6,396.4 1046.7,398 1046,396.6"/>
<polygon fill="#99cf99" points="1046.7,382.3 1047.9,381.9 1050.5,383.1 1052.1,382.3 1052.7,383.7 1055,384.3 1055.7,385 1056.9,385.3 1059,383.5 1060.4,383.1 1062.9,383.2 1064.2,384.9 1066.9,385.3 1067.5,385.9 1067.5,400.4 1065.6,400.4 1063.7,399.4 1062.9,398.6 1061.6,399.5 1059.3,399.5 1059.3,398 1060,397.1 1061.5,396.8 1062,395.8 1061.7,394.7 1060.2,392.8 1057.5,391.3 1055.9,391.1 1054.7,389.7 1053,388.6 1051.2,387.7 1049.5,387.4 1048.5,385.9 1047.5,384.7"/>
<polygon fill="#f2f7f2" points="1067.5,385.9 1069.4,386.4 1071.5,388.1 1073.8,388.6 1075.4,389.1 1077.1,389.4 1079.2,391.3 1079.8,392.1 1080.5,393.5 1081.4,394.7 1081.9,395.8 1083.5,396.7 1085.3,397.4 1086.5,399.5 1087.1,400.5 1087.8,401.5 1089.2,402.2 1087.6,402.1 1085.6,403.1 1084.7,402.8 1082.7,402.2 1081.6,401.3 1080.1,399.5 1078.4,398.6 1077.7,397.4 1075.6,396.7 1074.5,397.3 1073,395.9 1071.9,397.8 1070.2,397.7 1070.1,399.7 1067.5,400.4"/>
<polygon fill="#f2f7f2" points="1082.8,393.1 1084.2,393.6 1085.4,391.4 1086.7,391.4 1088.3,390.4 1089.6,389.4 1091.9,388.6 1091.5,389.9 1091,392.2 1089.4,392.6 1087.5,392.8 1085.6,394.6 1084.6,393.4"/>
<polygon fill="#f2f7f2" points="1100,394 1101.1,394.5 1102.2,395.3 1104,395.6 1104.5,396.7 1105.7,397.9 1106.9,398.5 1109.1,398 1109.2,399.9 1110,400.4 1111.1,401.6 1112.9,402.3 1114.1,403.2 1114.5,404 1112.9,403.1 1111.8,403.6 1110.7,403.8 1109.8,402.6 1107.3,402 1106.4,400.4 1105.6,399 1104.3,398.2 1103.3,397.7 1100.9,396.7 1100.4,395.6"/>
<polygon fill="#f2f7f2" points="1122.6,412.1 1123,412.9 1125.4,414.8 1124.5,416.7 1123.2,416 1122.3,413.9"/>
<polygon fill="#f2f7f2" points="1116.9,423.9 1117.3,425.2 1119.8,425.9 1120.8,426.6 1121.3,428 1123.8,428.8 1124.5,429.3 1122.6,429.7 1121.3,428.2 1119.5,427.8 1118.1,426.6 1116.8,426.1"/>
<polygon fill="#f2f7f2" points="1136.2,373.2 1138,375 1138.3,377 1138.6,379.6 1136.8,378.7 1136,377.2 1136.2,375.4"/>
<polygon fill="#f2f7f2" points="1074.3,349.7 1075.6,350.2 1075.1,351.9"/>
<polygon fill="#f2f7f2" points="1059.3,358.8 1060.5,359.3 1061.5,358.4 1060.8,360.2"/>
<polygon fill="#f2f7f2" points="1102.7,363.8 1104.7,363.7 1105.5,364.5 1104.5,366 1103,364.9"/>
<polygon fill="#f2f7f2" points="1113.6,367.8 1115.8,368.2 1115,369.6 1114.8,368.7"/>
<polygon fill="#5aaa5a" points="1069.6,283.6 1070.8,282.9 1072.9,283.5 1075,282.7 1075.8,283.9 1077.8,284.5 1075.9,284.7 1073.8,286.3 1073.2,287.2 1072.2,287 1070.4,288.1 1069.6,288.1 1069.2,286.3"/>
<polygon fill="#5aaa5a" points="1065.1,288.1 1065.5,289.2 1066.8,291.1 1068.7,291.7 1068.9,293 1069.6,295.4 1068.3,296.1 1068,298.5 1066.9,300.8 1065.3,301.3 1064.1,303.3 1062.4,303.5 1060.8,304.6 1058.9,303.4 1056.9,304.4 1055.2,304.8 1053.1,305.3 1051.5,306.2 1049.4,306.1 1048,307.7 1046.1,308 1045.6,308.8 1045.1,310.2 1043.4,311.7 1043.3,310.6 1042.5,308 1043.5,307.2 1043.5,305.4 1045.2,304.4 1046.7,304.8 1049,303.3 1050.5,302.4 1051.5,302.6 1052.5,301.5 1054.4,300.8 1055.9,301 1056.9,299.9 1058.3,299.7 1059.5,299.4 1060.1,297.7 1061.5,297.2 1062.7,296 1063,294.4 1064.2,292.7 1063.8,291.7 1065.1,290.1"/>
<polygon fill="#5aaa5a" points="1034.9,298.1 1036.5,298.1 1037.4,295.5 1038.9,295.7 1040.2,296.7 1040.8,298.4 1042.1,299 1042.6,300.2 1041.7,302.1 1041.6,303.5 1040.2,305 1037.9,305.3 1036.3,304.4 1035.2,304.4 1035.1,302.8 1035.9,301.5 1034.5,300.4"/>
<polygon fill="#276a27" points="1007.1,428.9 1007.9,427.9 1009.3,426.7 1010.8,426.1 1012.6,425.2 1014.5,425.5 1016.3,424 1017.8,424.4 1019.8,423.4 1021.1,423.2 1023.2,422.5 1025.1,421.9 1026.1,419.8 1026.8,418 1028.6,418.1 1029.2,416.1 1030.7,415.3 1031.4,414 1032.4,413.4 1034,412.8 1034.3,411.7 1035.7,412.4 1037.2,411.8 1038.4,412 1039.7,413.5 1040,412.6 1040.8,411.7 1041.5,410.2 1042.6,408.6 1044.2,408 1045.1,407.3 1047.2,407.7 1048.6,407.6 1050.6,406.2 1051.9,407.9 1053.6,407 1055.2,406.9 1057.8,407.1 1058.5,409.3 1055.1,409.7 1055.7,411.7 1055.1,412.6 1055.8,413 1057.5,414.9 1058.8,415.6 1059.6,416.2 1061.5,416.4 1063.1,418 1065,418.9 1065.9,417.4 1067.7,417.4 1068.7,415.3 1068.2,413.5 1068.7,411.6 1069.3,409.7 1069.6,408.9 1070.2,407.9 1069.8,406.3 1070.5,403.5 1071.6,404.1 1070.6,406.9 1072.9,407.5 1073.2,409.9 1074.2,411.4 1075,412.7 1076.8,414.4 1077.2,415.3 1077.9,417.6 1078.3,419.7 1078.6,420.7 1078.1,422.5 1080.1,422.6 1082,423.3 1083.1,425.2 1084.3,426 1085.5,428.5 1087.7,429.8 1088.9,431.2 1090.3,432 1091.2,434.6 1091.8,435.9 1093.1,436.1 1092.8,438.1 1093.8,439.2 1094.5,441.3 1094.3,442.4 1093.3,444 1093.7,446.3 1093.3,448.1 1092.2,449.7 1091.4,451.3 1090.8,453.9 1089.6,455.6 1088.6,456 1088.3,457.1 1088.2,459.2 1087.4,460.2 1086.7,461.4 1085.9,461.8 1084.3,462.4 1082.6,463 1081.3,464.1 1080.4,464.7 1079.1,463.7 1077.3,464.4 1075.9,465 1074.6,464.4 1072.6,464.6 1071,465 1069.6,465 1068.2,464.6 1066.8,462.9 1065,461.4 1064.4,460 1063.7,458 1061.4,456 1061.1,454.2 1060.9,452.9 1059.6,451.5 1059.6,452.9 1058.6,453.9 1056.9,456 1055.3,455.3 1054.9,452.9 1053.3,451.5 1052,450.5 1049.4,451.5 1048.8,449.7 1047.1,449.8 1044.8,449.2 1043.1,450.2 1041.5,449.7 1039.9,450.5 1038.4,450.7 1036,451.2 1034.3,450.6 1032.9,450.6 1031.8,451.1 1030.6,451.7 1028.9,453.3 1027.2,453 1025.5,453.8 1023.8,455.3 1021.6,456 1020.5,456.6 1018.8,456.1 1016.9,457 1014.4,456.9 1013.1,455.5 1010.8,454.2 1011.1,452.7 1012.9,451.1 1011.7,449.7 1011.7,448.4 1010.4,447.4 1009.1,445.4 1008.9,443.3 1009.3,442 1008.2,440 1008,438.7 1007.3,436.8 1006.2,436.1 1006.6,435.3 1005.8,432.9 1006,431.3 1006.2,429.9"/>
<polygon fill="#276a27" points="1075,469.6 1076.7,470 1078.2,469.6 1080.7,468.5 1082.2,469 1082.6,471 1080.7,472.6 1081.3,474.1 1080.8,475.4 1078.6,475.9 1076.8,475.3 1075.9,473.2 1075,471.6"/>
<polygon fill="#5aaa5a" points="1136.5,455.1 1137.5,456.3 1138.3,457.3 1140.1,457.8 1141.8,458.3 1142.6,459.2 1143.5,460.3 1143.7,461.4 1144.9,462.5 1147.3,461.7 1149.2,462.3 1148.3,463.1 1146.6,464.9 1145.6,466.8 1145.1,468.2 1143.5,469.6 1141.9,470.5 1140.9,469.1 1139.2,468.7 1139.3,467.2 1139.6,466.2 1141,465 1141,464.1 1139.6,463.1 1139.8,461 1138.3,459.6 1138.2,457.7 1136.9,455.9"/>
<polygon fill="#5aaa5a" points="1135.6,468.7 1136.7,469 1137.6,469.8 1139.2,470.5 1139.1,471.7 1138.2,474.1 1136.5,475 1135.3,475.2 1135.4,477.6 1133.3,476.7 1133,478.2 1132,478.6 1130.1,478.3 1129.8,480.7 1128.6,481.4 1127.3,481.7 1126.6,482.2 1125.5,482.4 1124.4,480.5 1122.9,480.4 1124.4,480.4 1125.8,478.1 1127.5,476.8 1128.9,475.7 1130.3,474.2 1132,473.2 1132.7,472.5 1133.5,471.2 1133.9,470"/>
<polygon fill="#ffffff" points="862.5,279.1 867,277.3 868.2,278.3 870,277.5 872.2,277.8 874.3,278.2 873.5,279.5 873.5,281 873.4,282.7 870.7,286.3 871.6,289.9 876.1,291.7 875.9,292.7 877.2,294.8 877,297.2 875.3,297.7 873.6,299.6 872.5,299.3 867.9,298.1 868.1,297.2 868.3,295.7 866.8,294.2 867,292.7 866.5,291.6 865.1,291 864.3,288.1 863.4,287.3 862.8,285.1 862,283.6 861.5,282 862.2,279.9"/>
<polygon fill="#1a5219" points="408.7,331.2 409.8,331.8 411.1,332.1 412.6,331.7 414.1,332.7 415.5,333 417.2,333.7 418.7,334.5 419.6,335 421,337.2 419.9,337.7 418.7,339 418.2,337.1 416.8,336.3 415.7,334.8 414.1,334.2 412.3,333.6 411.2,332.3"/>
<polygon fill="#f2f7f2" points="451.2,398.2 452.1,399.3 453.9,399.2 455.3,400.4 456.1,401.4 455.2,402.2 453.9,401.8 452.5,401.3 452.1,399.4"/>
<polygon fill="#f2f7f2" points="378.9,409 380.2,409.5 382.5,409.6 384.8,409.1 385.2,411 383.8,411.5 382.5,411.4 381,410.5"/>
<polygon fill="#f2f7f2" points="364.9,415 366.7,415.4 365.8,416.4"/>
<polygon fill="#f2f7f2" points="374.9,425.8 376.3,426.3 378.5,426.2 377.8,426.8 376.1,427.1"/>
<polygon fill="#f2f7f2" points="426.8,416.3 428,416.4 429.1,416.8 428.6,418.2 426.5,418.3"/>
<polygon fill="#f2f7f2" points="431.3,418.1 432.8,418.2 434,420.4 433.1,421.3 432.9,419.2"/>
<polygon fill="#5aaa5a" points="380,234.3 381.8,233.6 384.5,233.4 385.3,234.1 388.1,235.2 386.9,235.2 385.4,237 383.5,237.8 380.9,237.9 380,236.4"/>
<polygon fill="#99cf99" stroke-width="1.9" points="595.2,477.8 597.5,476.9 597.9,481.4 595.7,482.3"/>
<polygon fill="#99cf99" stroke-width="1.9" points="593.9,484.1 596.5,483.6 596.8,488.7 594.6,489.6 593.6,488.7 593.5,487.3 593.9,485.8"/>
<polygon fill="#99cf99" stroke-width="1.9" points="596.5,491.4 599.3,490.5 600.6,495 597.9,495.9"/>
<polygon fill="#99cf99" stroke-width="1.9" points="602.4,495.9 609.7,497.3 616,499.5 615.9,501.2 613.6,499.3 613.4,501.5 611.5,501.7 606,501.3 604.3,501.6 603,500.6 602.4,499.1"/>
<polygon fill="#ffffff" points="818,444.4 818.5,443.4 821,442.4 822.2,443.6 823.4,443.9 823.4,445.5 821.5,446.9 820.4,447.9 819,447.4 819,445.4"/>
<polygon fill="#f2f7f2" points="826.6,436.7 828.6,436.5 828.9,439.3 827,439.5"/>
<polygon fill="#f2f7f2" points="853.1,404.4 855,405.4 855,406.7 856.5,407.9 855.2,408.1 854.3,406.9 853.8,406.1"/>
<polygon fill="#f2f7f2" points="877.5,425.5 879.7,425.9 880.9,427.4 879.2,426.9"/>
<polygon fill="#f2f7f2" points="883.7,423.7 885.6,421.9 886.6,423.7 885.8,424.7 884.4,425.5"/>
</g></svg>
<svg id="ctl" style="position:absolute;left:0;top:0" width="120" height="260" viewBox="322 87 120 260">
<g fill="#063f06">
<rect x="356" y="184" width="22" height="68" rx="11"/>
<rect x="344.1" y="206.6" width="44.8" height="22.4" rx="11.2"/>
<rect x="356" y="258.5" width="22" height="66.5" rx="10"/>
</g>
<g fill="#fff">
<polygon points="367.2,188.8 361.1,200.4 373.3,200.4"/>
<polygon points="367.2,247.2 361.1,235.6 373.3,235.6"/>
<polygon points="349.2,217.5 360.2,211.2 360.2,223.8"/>
<polygon points="384.4,217.5 373.6,211.2 373.6,223.8"/>
<rect x="361.1" y="269.1" width="12.2" height="2.5"/>
<rect x="365.95" y="264.4" width="2.5" height="11.9"/>
<rect x="360.8" y="311.3" width="12.8" height="2.7"/>
</g>
<g fill="none" stroke="#a9a6f0" stroke-width="0.75">
<circle cx="367" cy="291.4" r="9.6" fill="#5a5fb0" fill-opacity=".28"/>
<ellipse cx="367" cy="291.4" rx="4.8" ry="9.6"/>
<line x1="367" y1="281.8" x2="367" y2="301"/>
<line x1="357.4" y1="291.4" x2="376.6" y2="291.4"/>
<path d="M359 286.2 Q367 289.4 375 286.2 M359 296.6 Q367 293.4 375 296.6"/>
</g>
</svg>

 <div style="position:absolute;left:11px;top:500px;width:189px;height:25px;background:linear-gradient(90deg,#fff 0,#eaf4e9 10%,#95c694 45%,#1f871f 80%,#004d00 100%)"></div>
 <div class="c" style="left:12px;top:498.5px;font-size:14.5px;color:#222">0</div>
 <div class="c" style="left:125px;top:498.5px;font-size:14.5px;color:#111">79,961</div>
 <div class="hline" style="top:537px"></div>
 <div class="hd" style="left:25px;top:549.5px">Report View by Selection</div>
 <div class="hd lnk" style="left:779px;top:549.5px">Customize</div>
 <div class="hline" style="top:582px;background:#cfcfcf"></div>
 <div id="tbl">
  <div style="position:absolute;left:0;top:0;width:887px;height:50px;background:#f5f5f5"></div>
  <div class="th" style="left:17px;top:3px">Total:</div><div class="th" style="left:28px;top:24px">4</div>
  <div class="th" style="left:101px;top:13px">Research Fields</div>
  <div class="th" style="left:270px;top:3px">Web of Science</div><div class="th" style="left:281px;top:24px">Documents</div>
  <div class="th" style="left:448px;top:13px;color:#4d7fb5">Cites</div>
  <div style="position:absolute;left:495px;top:21px;width:0;height:0;border-left:4.5px solid transparent;border-right:4.5px solid transparent;border-top:5.5px solid #6a9ad6"></div>
  <div class="th" style="left:572px;top:13px">Cites/Paper</div>
  <div class="th" style="left:741px;top:13px">Top Papers</div>

  <div class="row" style="top:50px;height:28px"></div>
  <div class="row" style="top:78px;height:32px"></div>
  <div class="row" style="top:110px;height:42px"></div>
  <div class="row" style="top:152px;height:32px"></div>

  <div class="c r" style="left:32px;width:40px;top:51px">1</div>
  <div class="c f" style="left:100px;top:54.2px">ENGINEERING</div>
  <div class="c r" style="left:326px;width:80px;top:51px">679</div>
  <div class="c r" style="left:466px;width:80px;top:51px">15,058</div>
  <div class="c r" style="left:612px;width:80px;top:51px">22.18</div>
  <div class="bar" style="top:50px"><s style="width:123px"></s><u>19</u></div>

  <div class="c r" style="left:32px;width:40px;top:83px">2</div>
  <div class="c f" style="left:100px;top:86.2px">CHEMISTRY</div>
  <div class="c r" style="left:326px;width:80px;top:83px">843</div>
  <div class="c r" style="left:466px;width:80px;top:83px">14,313</div>
  <div class="c r" style="left:612px;width:80px;top:83px">16.98</div>
  <div class="bar" style="top:82px"><s style="width:65px"></s><u style="color:#445">10</u></div>

  <div class="c r" style="left:32px;width:40px;top:120px">3</div>
  <div class="c f" style="left:100px;top:115px">ENVIRONMENT/E<br>COLOGY</div>
  <div class="c r" style="left:326px;width:80px;top:120px">316</div>
  <div class="c r" style="left:466px;width:80px;top:120px">8,831</div>
  <div class="c r" style="left:612px;width:80px;top:120px">27.95</div>
  <div class="bar" style="top:119px"><s style="width:98px"></s><u style="color:#445">15</u></div>

  <div class="c r" style="left:32px;width:40px;top:157px">0</div>
  <div class="c f" style="left:100px;top:160.2px">ALL FIELDS</div>
  <div class="c r" style="left:326px;width:80px;top:157px">3,074</div>
  <div class="c r" style="left:466px;width:80px;top:157px">56,904</div>
  <div class="c r" style="left:612px;width:80px;top:157px">18.51</div>
  <div class="bar" style="top:156px"><s style="width:123px"></s><u>59</u></div>
 </div>
</div>
</body></html>
